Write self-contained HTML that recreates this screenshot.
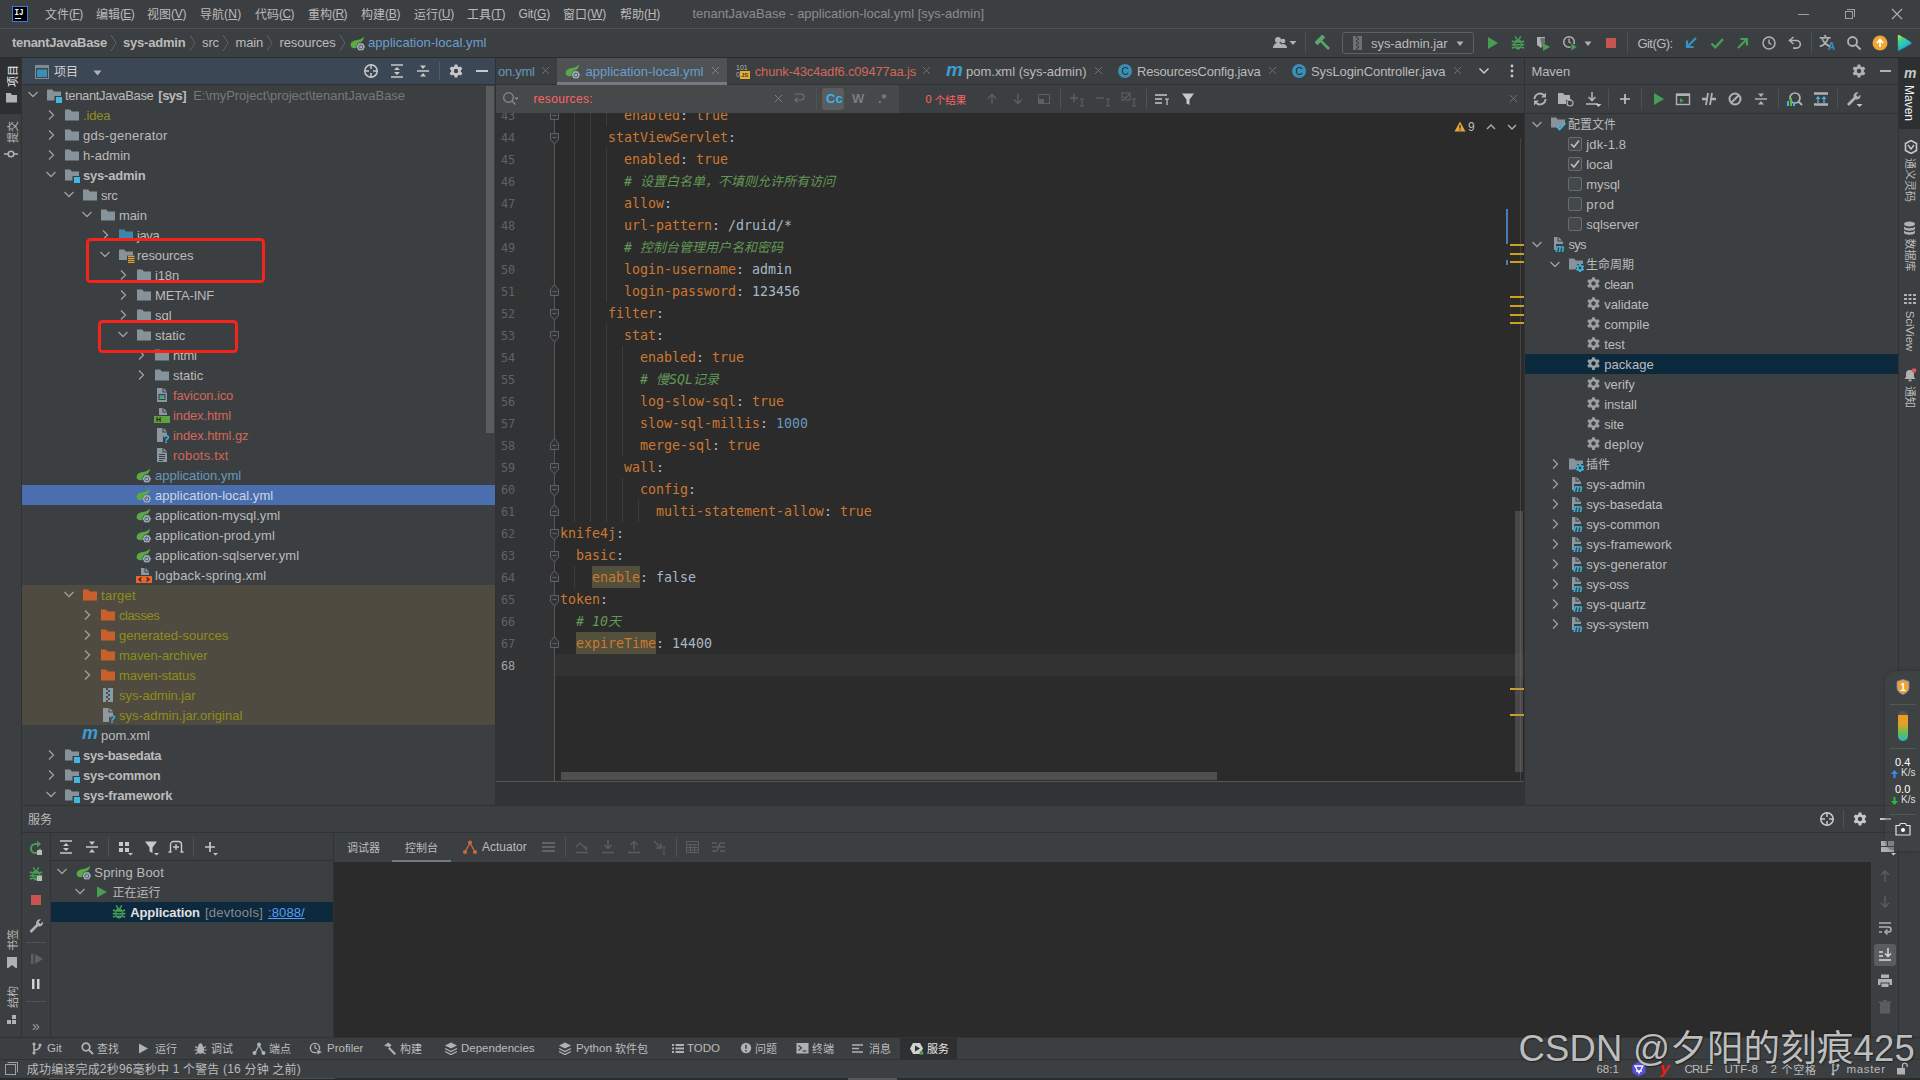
<!DOCTYPE html>
<html lang="zh-CN"><head><meta charset="utf-8"><title>tenantJavaBase - application-local.yml</title>
<style>
*{box-sizing:border-box;margin:0;padding:0}
html,body{width:1920px;height:1080px;overflow:hidden;background:#3c3f41}
body{position:relative;font-family:"Liberation Sans","Noto Sans CJK SC",sans-serif;font-size:13px;color:#bbbbbb}
.t{position:absolute;white-space:pre;}
.u{font-size:13px}
.c{font-size:12px}
.t .c{position:relative;top:1px}
.s{font-size:12px}
.s .c,.c.s{font-size:11px}
.sb .c{font-size:12px}
.b{font-weight:bold}
.m{font-family:"DejaVu Sans Mono","Liberation Mono","Noto Sans CJK SC",monospace;font-size:13.290px}
.ln{font-family:"DejaVu Sans Mono","Liberation Mono",monospace;font-size:11.800px}
u{text-decoration:underline;text-underline-offset:1px}
.m .z{font-size:13px}
.k{color:#cc7832}.v{color:#a9b7c6}.n{color:#6897bb}.cm{color:#629755;font-style:italic}
.hl{}
</style></head>
<body>
<div style="position:absolute;left:0px;top:0px;width:1920px;height:1080px;background:#3c3f41;"></div>
<div style="position:absolute;left:0px;top:28px;width:1920px;height:1px;background:#515151;"></div>
<div style="position:absolute;left:0px;top:57px;width:1920px;height:1px;background:#2b2b2b;"></div>
<div style="position:absolute;left:12px;top:6px;width:16px;height:16px;background:#000;border:1px solid #3b7be0"></div>
<svg style="position:absolute;left:12px;top:6px" width="16" height="16" viewBox="0 0 16 16" ><text x="2.600" y="9" font-family="Liberation Mono, monospace" font-weight="bold" font-size="8.500" fill="#fff" textLength="9" lengthAdjust="spacingAndGlyphs">IJ</text></svg>
<div style="position:absolute;left:15px;top:18px;width:6px;height:1px;background:#fff;"></div>
<div class="t u" style="left:45px;top:0px;height:28px;line-height:28px;"><span class="c">文件</span><span style="font-size:12px;letter-spacing:-0.61px">(<u>F</u>)</span></div>
<div class="t u" style="left:96px;top:0px;height:28px;line-height:28px;"><span class="c">编辑</span><span style="font-size:12px;letter-spacing:-0.67px">(<u>E</u>)</span></div>
<div class="t u" style="left:147px;top:0px;height:28px;line-height:28px;"><span class="c">视图</span><span style="font-size:12px;letter-spacing:-0.33px">(<u>V</u>)</span></div>
<div class="t u" style="left:200px;top:0px;height:28px;line-height:28px;"><span class="c">导航</span><span style="font-size:12px;letter-spacing:0.28px">(<u>N</u>)</span></div>
<div class="t u" style="left:255px;top:0px;height:28px;line-height:28px;"><span class="c">代码</span><span style="font-size:12px;letter-spacing:-0.55px">(<u>C</u>)</span></div>
<div class="t u" style="left:308px;top:0px;height:28px;line-height:28px;"><span class="c">重构</span><span style="font-size:12px;letter-spacing:-0.55px">(<u>R</u>)</span></div>
<div class="t u" style="left:361px;top:0px;height:28px;line-height:28px;"><span class="c">构建</span><span style="font-size:12px;letter-spacing:-0.33px">(<u>B</u>)</span></div>
<div class="t u" style="left:414px;top:0px;height:28px;line-height:28px;"><span class="c">运行</span><span style="font-size:12px;letter-spacing:-0.22px">(<u>U</u>)</span></div>
<div class="t u" style="left:467px;top:0px;height:28px;line-height:28px;"><span class="c">工具</span><span style="font-size:12px;letter-spacing:-0.44px">(<u>T</u>)</span></div>
<div class="t u" style="left:518.5px;top:0px;height:28px;line-height:28px;font-size:12px;letter-spacing:-0.193px;">Git(<u>G</u>)</div>
<div class="t u" style="left:563px;top:0px;height:28px;line-height:28px;"><span class="c">窗口</span><span style="font-size:12px;letter-spacing:-0.11px">(<u>W</u>)</span></div>
<div class="t u" style="left:620px;top:0px;height:28px;line-height:28px;"><span class="c">帮助</span><span style="font-size:12px;letter-spacing:-0.22px">(<u>H</u>)</span></div>
<div class="t u" style="left:692.5px;top:0px;height:28px;line-height:28px;color:#8c8c8c;letter-spacing:-0.008px;">tenantJavaBase - application-local.yml [sys-admin]</div>
<div style="position:absolute;left:1798px;top:14px;width:11px;height:1px;background:#a0a0a0;"></div>
<div style="position:absolute;left:1845px;top:11px;width:8px;height:8px;border:1px solid #a0a0a0"></div>
<div style="position:absolute;left:1847px;top:9px;width:8px;height:8px;border-top:1px solid #a0a0a0;border-right:1px solid #a0a0a0"></div>
<svg style="position:absolute;left:1891px;top:8px" width="12" height="12" viewBox="0 0 12 12" ><path d="M1 1l10 10M11 1L1 11" stroke="#b0b0b0" stroke-width="1.1"/></svg>
<div class="t u b" style="left:12px;top:29px;height:28px;line-height:28px;letter-spacing:-0.285px;">tenantJavaBase</div>
<svg style="position:absolute;left:110px;top:34px" width="8" height="18" viewBox="0 0 8 18" ><path d="M1 1l5 8-5 8" fill="none" stroke="#5e6163" stroke-width="1"/></svg>
<div class="t u b" style="left:123px;top:29px;height:28px;line-height:28px;letter-spacing:-0.200px;">sys-admin</div>
<svg style="position:absolute;left:189px;top:34px" width="8" height="18" viewBox="0 0 8 18" ><path d="M1 1l5 8-5 8" fill="none" stroke="#5e6163" stroke-width="1"/></svg>
<div class="t u" style="left:202px;top:29px;height:28px;line-height:28px;letter-spacing:-0.110px;">src</div>
<svg style="position:absolute;left:222px;top:34px" width="8" height="18" viewBox="0 0 8 18" ><path d="M1 1l5 8-5 8" fill="none" stroke="#5e6163" stroke-width="1"/></svg>
<div class="t u" style="left:235.5px;top:29px;height:28px;line-height:28px;letter-spacing:-0.169px;">main</div>
<svg style="position:absolute;left:266px;top:34px" width="8" height="18" viewBox="0 0 8 18" ><path d="M1 1l5 8-5 8" fill="none" stroke="#5e6163" stroke-width="1"/></svg>
<div class="t u" style="left:279.5px;top:29px;height:28px;line-height:28px;letter-spacing:-0.119px;">resources</div>
<svg style="position:absolute;left:339px;top:34px" width="8" height="18" viewBox="0 0 8 18" ><path d="M1 1l5 8-5 8" fill="none" stroke="#5e6163" stroke-width="1"/></svg>
<svg style="position:absolute;left:350px;top:35px" width="16" height="16" viewBox="0 0 16 16" ><path d="M14 1.400C13.600 4.600 12.600 6.400 10.600 7.300L10 11C7.500 13.600 3.500 13.900 1.200 12C-0.200 9.500 1 6.400 4.600 5.400C8 4.600 11.600 4.600 14 1.400z" fill="#5aa846"/><path d="M15.300 11.800l-2.250 3.900h-4.500L6.300 11.800l2.250-3.900h4.500z" fill="#aab9c6" stroke="#3c3f41" stroke-width=".7"/><circle cx="10.800" cy="11.900" r="2" fill="none" stroke="#3c4a58" stroke-width=".9"/><rect x="10.200" y="8.900" width="1.200" height="1.800" fill="#aab9c6"/><rect x="10.450" y="9.400" width=".7" height="2.300" fill="#3c4a58"/></svg>
<div class="t u" style="left:368px;top:29px;height:28px;line-height:28px;color:#6a9fd0;letter-spacing:0.069px;">application-local.yml</div>
<svg style="position:absolute;left:1272px;top:35px" width="16" height="16" viewBox="0 0 16 16" ><circle cx="6" cy="5" r="3" fill="#afb1b3"/><path d="M1 13c0-3 2-5 5-5s5 2 5 5z" fill="#afb1b3"/><circle cx="11" cy="6" r="2.3" fill="#afb1b3"/><path d="M9 13c0-2 .5-4 2-4s4 1 4 4z" fill="#afb1b3"/></svg>
<svg style="position:absolute;left:1289px;top:40px" width="8" height="6" viewBox="0 0 8 6" ><path d="M0.5 1h7L4 5z" fill="#afb1b3"/></svg>
<div style="position:absolute;left:1305px;top:33px;width:1px;height:20px;background:#515151;"></div>
<svg style="position:absolute;left:1315px;top:35px" width="16" height="16" viewBox="0 0 16 16" ><g transform="rotate(-45 8 8)" fill="#59a869"><rect x="2.500" y="1.500" width="11" height="4.200"/><rect x="6.700" y="5" width="2.600" height="11.500"/></g></svg>
<div style="position:absolute;left:1342px;top:32px;width:132px;height:22px;border:1px solid #5e6060;border-radius:3px;background:#3c3f41"></div>
<svg style="position:absolute;left:1350px;top:35px" width="16" height="16" viewBox="0 0 16 16" ><rect x="3" y="1" width="9" height="14" fill="#6e7173"/><g fill="#3c3f41"><rect x="6" y="1" width="1.5" height="2"/><rect x="7.5" y="3" width="1.5" height="2"/><rect x="6" y="5" width="1.5" height="2"/><rect x="7.5" y="7" width="1.5" height="2"/><rect x="6" y="9" width="1.5" height="2"/><rect x="7.5" y="11" width="1.5" height="2"/><rect x="6" y="13" width="1.5" height="2"/></g></svg>
<div class="t u" style="left:1371px;top:30px;height:28px;line-height:28px;letter-spacing:-0.061px;">sys-admin.jar</div>
<svg style="position:absolute;left:1456px;top:41px" width="8" height="6" viewBox="0 0 8 6" ><path d="M0.5 0.5h7L4 5z" fill="#afb1b3"/></svg>
<svg style="position:absolute;left:1484px;top:35px" width="16" height="16" viewBox="0 0 16 16" ><path d="M4 2l10 6-10 6z" fill="#499c54"/></svg>
<svg style="position:absolute;left:1510px;top:35px" width="16" height="16" viewBox="0 0 16 16" ><ellipse cx="8" cy="9.300" rx="4" ry="5.300" fill="#499c54"/><path d="M5.200 1.300l1.900 3M10.800 1.300l-1.900 3" stroke="#499c54" stroke-width="1.500"/><path d="M1.900 6.200l2.800 .8M14.100 6.200l-2.800 .8M1.700 9.600h3M14.300 9.600h-3M1.900 13l2.800-.8M14.100 13l-2.800-.8" stroke="#499c54" stroke-width="1.800"/><path d="M5.400 8.300h5.200M5.400 11h5.200" stroke="#3c3f41" stroke-width="1.200"/></svg>
<svg style="position:absolute;left:1535px;top:35px" width="16" height="16" viewBox="0 0 16 16" ><path d="M2 2h8v5l-4 6-4-3z" fill="#afb1b3"/><path d="M5 3h5v4l-3 5z" fill="#6e7173"/><path d="M8 8l7 4-7 4z" fill="#499c54"/></svg>
<svg style="position:absolute;left:1562px;top:35px" width="16" height="16" viewBox="0 0 16 16" ><circle cx="7" cy="7" r="5.3" fill="none" stroke="#afb1b3" stroke-width="1.5"/><path d="M7 3.5V7l2.5 1.5" stroke="#afb1b3" stroke-width="1.3" fill="none"/><path d="M9 8l6.5 4-6.5 4z" fill="#499c54" stroke="#3c3f41" stroke-width=".8"/></svg>
<svg style="position:absolute;left:1584px;top:41px" width="8" height="6" viewBox="0 0 8 6" ><path d="M0.5 0.5h7L4 5z" fill="#afb1b3"/></svg>
<div style="position:absolute;left:1606px;top:38px;width:10px;height:10px;background:#c75450;"></div>
<div style="position:absolute;left:1627px;top:33px;width:1px;height:20px;background:#515151;"></div>
<div class="t u" style="left:1637.5px;top:30px;height:28px;line-height:28px;letter-spacing:-0.570px;">Git(G):</div>
<svg style="position:absolute;left:1683px;top:35px" width="16" height="16" viewBox="0 0 16 16" ><path d="M13 3L4.5 11.5M4 5.5V12h6.5" fill="none" stroke="#3592c4" stroke-width="2.2"/></svg>
<svg style="position:absolute;left:1709px;top:35px" width="16" height="16" viewBox="0 0 16 16" ><path d="M2.5 8.5l3.8 3.8L14 4.2" fill="none" stroke="#499c54" stroke-width="2.4"/></svg>
<svg style="position:absolute;left:1735px;top:35px" width="16" height="16" viewBox="0 0 16 16" ><path d="M3 13l8.5-8.5M5.5 4H12v6.5" fill="none" stroke="#499c54" stroke-width="2.2"/></svg>
<svg style="position:absolute;left:1761px;top:35px" width="16" height="16" viewBox="0 0 16 16" ><circle cx="8" cy="8" r="6" fill="none" stroke="#afb1b3" stroke-width="1.5"/><path d="M8 4.5V8l2.5 1.5" stroke="#afb1b3" stroke-width="1.4" fill="none"/></svg>
<svg style="position:absolute;left:1787px;top:35px" width="16" height="16" viewBox="0 0 16 16" ><path d="M3 5.5h6.5a3.8 3.8 0 010 7.600H6" fill="none" stroke="#afb1b3" stroke-width="1.6"/><path d="M6.5 2L2.5 5.5l4 3.500" fill="none" stroke="#afb1b3" stroke-width="1.6"/></svg>
<div style="position:absolute;left:1811px;top:33px;width:1px;height:20px;background:#515151;"></div>
<div class="t" style="left:1819px;top:35px;font:bold 12px/12px 'Noto Sans CJK SC',sans-serif;color:#afb1b3">文</div>
<div class="t" style="left:1828px;top:41px;font:bold 10px/12px 'Liberation Sans',sans-serif;color:#3592c4">A</div>
<svg style="position:absolute;left:1846px;top:35px" width="16" height="16" viewBox="0 0 16 16" ><circle cx="6.5" cy="6.5" r="4.5" fill="none" stroke="#afb1b3" stroke-width="1.8"/><path d="M10 10l4.5 4.5" stroke="#afb1b3" stroke-width="2"/></svg>
<svg style="position:absolute;left:1872px;top:35px" width="16" height="16" viewBox="0 0 16 16" ><circle cx="8" cy="8" r="7.500" fill="#f0a732"/><path d="M8 12V5M4.800 8L8 4.500 11.200 8" fill="none" stroke="#fff" stroke-width="1.700"/></svg>
<svg style="position:absolute;left:1896px;top:34px" width="17" height="18" viewBox="0 0 17 18" ><defs><linearGradient id="jbg" x1="0" y1="0" x2="0.600" y2="1"><stop offset="0" stop-color="#d8e84a"/><stop offset=".35" stop-color="#3fd08a"/><stop offset=".7" stop-color="#1fa8c8"/><stop offset="1" stop-color="#2a6fe0"/></linearGradient></defs><path d="M3.500 1.200C2.500.8 1.800 1.400 1.800 2.400V15.500c0 1 .8 1.600 1.700 1.100L15 10.200c.9-.5.900-1.700 0-2.200z" fill="url(#jbg)"/><path d="M2 9l6-6 6.500 5.500L5 15z" fill="#40e0b0" opacity=".35"/></svg>
<div style="position:absolute;left:21px;top:58px;width:1px;height:979px;background:#323232;"></div>
<div style="position:absolute;left:0px;top:58px;width:21px;height:56px;background:#2d2f30;"></div>
<div class="t c" style="left:12.5px;top:76px;width:0;height:0;overflow:visible"><div style="position:absolute;white-space:pre;transform:translate(-50%,-50%) rotate(-90deg);font-size:11px;line-height:13px;color:#f0f0f0;">项目</div></div>
<svg style="position:absolute;left:6px;top:92px" width="11" height="11" viewBox="0 0 11 11" ><path d="M0 1h4.500l1.500 2H11v7.500H0z" fill="#afb1b3"/></svg>
<div class="t c" style="left:12.5px;top:132px;width:0;height:0;overflow:visible"><div style="position:absolute;white-space:pre;transform:translate(-50%,-50%) rotate(-90deg);font-size:11px;line-height:13px;color:#bbbbbb;">提交</div></div>
<svg style="position:absolute;left:4px;top:147px" width="14" height="14" viewBox="0 0 14 14" ><circle cx="7" cy="7" r="2.800" fill="none" stroke="#afb1b3" stroke-width="1.600"/><path d="M0 7h4M10 7h4" stroke="#afb1b3" stroke-width="1.600"/></svg>
<div class="t c" style="left:12.5px;top:940px;width:0;height:0;overflow:visible"><div style="position:absolute;white-space:pre;transform:translate(-50%,-50%) rotate(-90deg);font-size:11px;line-height:13px;color:#bbbbbb;">书签</div></div>
<svg style="position:absolute;left:7px;top:957px" width="10" height="11" viewBox="0 0 10 11" ><path d="M0 0h10v12l-5-4-5 4z" fill="#afb1b3"/></svg>
<div class="t c" style="left:12.5px;top:997px;width:0;height:0;overflow:visible"><div style="position:absolute;white-space:pre;transform:translate(-50%,-50%) rotate(-90deg);font-size:11px;line-height:13px;color:#bbbbbb;">结构</div></div>
<svg style="position:absolute;left:7px;top:1015px" width="10" height="10" viewBox="0 0 10 10" ><rect x="5" y="0" width="4" height="4" fill="#afb1b3"/><rect x="0" y="5" width="4" height="4" fill="#afb1b3"/><rect x="5" y="5" width="4" height="4" fill="#afb1b3"/></svg>
<div style="position:absolute;left:22px;top:58px;width:473px;height:26px;background:#3b4754;"></div>
<div style="position:absolute;left:22px;top:84px;width:473px;height:1px;background:#323232;"></div>
<div style="position:absolute;left:495px;top:58px;width:1px;height:748px;background:#323232;"></div>
<svg style="position:absolute;left:35px;top:65px" width="14" height="14" viewBox="0 0 14 14" ><rect x="0.500" y="0.500" width="13" height="13" fill="none" stroke="#7f8b91"/><rect x="0.500" y="0.500" width="13" height="2.500" fill="#7f8b91"/><rect x="2" y="4.500" width="10" height="7.500" fill="#3a8fb4"/></svg>
<div class="t c" style="left:54px;top:59px;height:26px;line-height:26px;color:#d0d0d0;">项目</div>
<svg style="position:absolute;left:93px;top:70px" width="9" height="6" viewBox="0 0 9 6" ><path d="M0.500 0.500h8L4.500 5.500z" fill="#afb1b3"/></svg>
<svg style="position:absolute;left:363px;top:63px" width="16" height="16" viewBox="0 0 16 16" ><circle cx="8" cy="8" r="6.200" fill="none" stroke="#c8c8c8" stroke-width="1.500"/><path d="M8 1v5M8 10v5M1 8h5M10 8h5" stroke="#c8c8c8" stroke-width="1.500"/></svg>
<svg style="position:absolute;left:389px;top:63px" width="16" height="16" viewBox="0 0 16 16" ><path d="M2 2h12M2 14h12" stroke="#c8c8c8" stroke-width="1.500"/><path d="M8 4L5 7h6zM8 12L5 9h6z" fill="#c8c8c8"/></svg>
<svg style="position:absolute;left:415px;top:63px" width="16" height="16" viewBox="0 0 16 16" ><path d="M2 8h12" stroke="#c8c8c8" stroke-width="1.500"/><path d="M8 6L5 2.500h6zM8 10l-3 3.500h6z" fill="#c8c8c8"/></svg>
<div style="position:absolute;left:439px;top:62px;width:1px;height:18px;background:#4e5a66;"></div>
<svg style="position:absolute;left:448px;top:63px" width="16" height="16" viewBox="0 0 16 16" ><g><path d="M6.18 4.10L6.69 1.50H9.31L9.82 4.10z" transform="rotate(0.0 8 8)" fill="#c8c8c8"/><path d="M6.18 4.10L6.69 1.50H9.31L9.82 4.10z" transform="rotate(60.0 8 8)" fill="#c8c8c8"/><path d="M6.18 4.10L6.69 1.50H9.31L9.82 4.10z" transform="rotate(120.0 8 8)" fill="#c8c8c8"/><path d="M6.18 4.10L6.69 1.50H9.31L9.82 4.10z" transform="rotate(180.0 8 8)" fill="#c8c8c8"/><path d="M6.18 4.10L6.69 1.50H9.31L9.82 4.10z" transform="rotate(240.0 8 8)" fill="#c8c8c8"/><path d="M6.18 4.10L6.69 1.50H9.31L9.82 4.10z" transform="rotate(300.0 8 8)" fill="#c8c8c8"/><circle cx="8" cy="8" r="4.81" fill="#c8c8c8"/></g><circle cx="8" cy="8" r="2.21" fill="#3b4754"/></svg>
<div style="position:absolute;left:476px;top:70px;width:12px;height:2px;background:#c8c8c8;"></div>
<svg style="position:absolute;left:25px;top:86px" width="16" height="16" viewBox="0 0 16 16" ><path d="M3.5 6l4.5 4.5L12.5 6" fill="none" stroke="#9da0a2" stroke-width="1.3"/></svg>
<svg style="position:absolute;left:46px;top:87px" width="16" height="16" viewBox="0 0 16 16" ><path d="M1 2.5h5.2l1.6 2H15v4.5H8.5v4.5H1z" fill="#87939a"/><rect x="10" y="10" width="6" height="6" fill="#40b6e0"/></svg>
<div class="t u" style="left:65px;top:86px;height:20px;line-height:20px;"><span style="letter-spacing:-0.338px">tenantJavaBase</span><b style="letter-spacing:-0.5px;margin-left:4.8px">[sys]</b><span style="color:#787878;margin-left:7px;letter-spacing:-0.039px">E:\myProject\project\tenantJavaBase</span></div>
<svg style="position:absolute;left:43px;top:107px" width="16" height="16" viewBox="0 0 16 16" ><path d="M6 3.5l4.5 4.5L6 12.5" fill="none" stroke="#9da0a2" stroke-width="1.3"/></svg>
<svg style="position:absolute;left:64px;top:107px" width="16" height="16" viewBox="0 0 16 16" ><path d="M1 2.5h5.2l1.6 2H15v9H1z" fill="#87939a"/></svg>
<div class="t u" style="left:83px;top:106px;height:20px;line-height:20px;color:#8d8e1d;"><span style="letter-spacing:-0.158px">.idea</span></div>
<svg style="position:absolute;left:43px;top:127px" width="16" height="16" viewBox="0 0 16 16" ><path d="M6 3.5l4.5 4.5L6 12.5" fill="none" stroke="#9da0a2" stroke-width="1.3"/></svg>
<svg style="position:absolute;left:64px;top:127px" width="16" height="16" viewBox="0 0 16 16" ><path d="M1 2.5h5.2l1.6 2H15v9H1z" fill="#87939a"/></svg>
<div class="t u" style="left:83px;top:126px;height:20px;line-height:20px;"><span style="letter-spacing:0.290px">gds-generator</span></div>
<svg style="position:absolute;left:43px;top:147px" width="16" height="16" viewBox="0 0 16 16" ><path d="M6 3.5l4.5 4.5L6 12.5" fill="none" stroke="#9da0a2" stroke-width="1.3"/></svg>
<svg style="position:absolute;left:64px;top:147px" width="16" height="16" viewBox="0 0 16 16" ><path d="M1 2.5h5.2l1.6 2H15v9H1z" fill="#87939a"/></svg>
<div class="t u" style="left:83px;top:146px;height:20px;line-height:20px;"><span style="letter-spacing:0.062px">h-admin</span></div>
<svg style="position:absolute;left:43px;top:166px" width="16" height="16" viewBox="0 0 16 16" ><path d="M3.5 6l4.5 4.5L12.5 6" fill="none" stroke="#9da0a2" stroke-width="1.3"/></svg>
<svg style="position:absolute;left:64px;top:167px" width="16" height="16" viewBox="0 0 16 16" ><path d="M1 2.5h5.2l1.6 2H15v4.5H8.5v4.5H1z" fill="#87939a"/><rect x="10" y="10" width="6" height="6" fill="#40b6e0"/></svg>
<div class="t u b" style="left:83px;top:166px;height:20px;line-height:20px;"><span style="letter-spacing:-0.200px">sys-admin</span></div>
<svg style="position:absolute;left:61px;top:186px" width="16" height="16" viewBox="0 0 16 16" ><path d="M3.5 6l4.5 4.5L12.5 6" fill="none" stroke="#9da0a2" stroke-width="1.3"/></svg>
<svg style="position:absolute;left:82px;top:187px" width="16" height="16" viewBox="0 0 16 16" ><path d="M1 2.5h5.2l1.6 2H15v9H1z" fill="#87939a"/></svg>
<div class="t u" style="left:101px;top:186px;height:20px;line-height:20px;"><span style="letter-spacing:-0.310px">src</span></div>
<svg style="position:absolute;left:79px;top:206px" width="16" height="16" viewBox="0 0 16 16" ><path d="M3.5 6l4.5 4.5L12.5 6" fill="none" stroke="#9da0a2" stroke-width="1.3"/></svg>
<svg style="position:absolute;left:100px;top:207px" width="16" height="16" viewBox="0 0 16 16" ><path d="M1 2.5h5.2l1.6 2H15v9H1z" fill="#87939a"/></svg>
<div class="t u" style="left:119px;top:206px;height:20px;line-height:20px;"><span style="letter-spacing:-0.094px">main</span></div>
<svg style="position:absolute;left:97px;top:227px" width="16" height="16" viewBox="0 0 16 16" ><path d="M6 3.5l4.5 4.5L6 12.5" fill="none" stroke="#9da0a2" stroke-width="1.3"/></svg>
<svg style="position:absolute;left:118px;top:227px" width="16" height="16" viewBox="0 0 16 16" ><path d="M1 2.5h5.2l1.6 2H15v9H1z" fill="#3d88aa"/></svg>
<div class="t u" style="left:137px;top:226px;height:20px;line-height:20px;"><span style="letter-spacing:-0.412px">java</span></div>
<svg style="position:absolute;left:97px;top:246px" width="16" height="16" viewBox="0 0 16 16" ><path d="M3.5 6l4.5 4.5L12.5 6" fill="none" stroke="#9da0a2" stroke-width="1.3"/></svg>
<svg style="position:absolute;left:118px;top:247px" width="17" height="16" viewBox="0 0 17 16" ><path d="M1 2.500h5.200l1.600 2H15v4H9v4.500H1z" fill="#87939a"/><g fill="#f4af3d"><rect x="10" y="8.800" width="6.500" height="1.100"/><rect x="10" y="10.800" width="6.500" height="1.100"/><rect x="10" y="12.800" width="6.500" height="1.100"/><rect x="10" y="14.800" width="6.500" height="1.100"/></g></svg>
<div class="t u" style="left:137px;top:246px;height:20px;line-height:20px;"><span style="letter-spacing:-0.086px">resources</span></div>
<svg style="position:absolute;left:115px;top:267px" width="16" height="16" viewBox="0 0 16 16" ><path d="M6 3.5l4.5 4.5L6 12.5" fill="none" stroke="#9da0a2" stroke-width="1.3"/></svg>
<svg style="position:absolute;left:136px;top:267px" width="16" height="16" viewBox="0 0 16 16" ><path d="M1 2.5h5.2l1.6 2H15v9H1z" fill="#87939a"/></svg>
<div class="t u" style="left:155px;top:266px;height:20px;line-height:20px;"><span style="letter-spacing:-0.144px">i18n</span></div>
<svg style="position:absolute;left:115px;top:287px" width="16" height="16" viewBox="0 0 16 16" ><path d="M6 3.5l4.5 4.5L6 12.5" fill="none" stroke="#9da0a2" stroke-width="1.3"/></svg>
<svg style="position:absolute;left:136px;top:287px" width="16" height="16" viewBox="0 0 16 16" ><path d="M1 2.5h5.2l1.6 2H15v9H1z" fill="#87939a"/></svg>
<div class="t u" style="left:155px;top:286px;height:20px;line-height:20px;"><span style="letter-spacing:-0.164px">META-INF</span></div>
<svg style="position:absolute;left:115px;top:307px" width="16" height="16" viewBox="0 0 16 16" ><path d="M6 3.5l4.5 4.5L6 12.5" fill="none" stroke="#9da0a2" stroke-width="1.3"/></svg>
<svg style="position:absolute;left:136px;top:307px" width="16" height="16" viewBox="0 0 16 16" ><path d="M1 2.5h5.2l1.6 2H15v9H1z" fill="#87939a"/></svg>
<div class="t u" style="left:155px;top:306px;height:20px;line-height:20px;"><span style="letter-spacing:0.027px">sql</span></div>
<svg style="position:absolute;left:115px;top:326px" width="16" height="16" viewBox="0 0 16 16" ><path d="M3.5 6l4.5 4.5L12.5 6" fill="none" stroke="#9da0a2" stroke-width="1.3"/></svg>
<svg style="position:absolute;left:136px;top:327px" width="16" height="16" viewBox="0 0 16 16" ><path d="M1 2.5h5.2l1.6 2H15v9H1z" fill="#87939a"/></svg>
<div class="t u" style="left:155px;top:326px;height:20px;line-height:20px;"><span style="letter-spacing:-0.023px">static</span></div>
<svg style="position:absolute;left:133px;top:347px" width="16" height="16" viewBox="0 0 16 16" ><path d="M6 3.5l4.5 4.5L6 12.5" fill="none" stroke="#9da0a2" stroke-width="1.3"/></svg>
<svg style="position:absolute;left:154px;top:347px" width="16" height="16" viewBox="0 0 16 16" ><path d="M1 2.5h5.2l1.6 2H15v9H1z" fill="#87939a"/></svg>
<div class="t u" style="left:173px;top:346px;height:20px;line-height:20px;"><span style="letter-spacing:-0.214px">html</span></div>
<svg style="position:absolute;left:133px;top:367px" width="16" height="16" viewBox="0 0 16 16" ><path d="M6 3.5l4.5 4.5L6 12.5" fill="none" stroke="#9da0a2" stroke-width="1.3"/></svg>
<svg style="position:absolute;left:154px;top:367px" width="16" height="16" viewBox="0 0 16 16" ><path d="M1 2.5h5.2l1.6 2H15v9H1z" fill="#87939a"/></svg>
<div class="t u" style="left:173px;top:366px;height:20px;line-height:20px;"><span style="letter-spacing:-0.023px">static</span></div>
<svg style="position:absolute;left:154px;top:387px" width="16" height="16" viewBox="0 0 16 16" ><path d="M8.5 1H3v14h10V5.5H8.5z" fill="#9aa7b0" opacity=".85"/><path d="M9.5 1L13 4.5H9.5z" fill="#9aa7b0" opacity=".85"/><rect x="4.5" y="7" width="7" height="6" fill="#3c3f41"/><rect x="5.5" y="8" width="5" height="4" fill="#3592c4"/><path d="M5.5 12l2-2 1 1 1-1.5 1 2.5z" fill="#62b543"/></svg>
<div class="t u" style="left:173px;top:386px;height:20px;line-height:20px;color:#d1675a;"><span style="letter-spacing:-0.111px">favicon.ico</span></div>
<svg style="position:absolute;left:154px;top:407px" width="16" height="16" viewBox="0 0 16 16" ><path d="M8.5 1H5v7h8V5.5H8.5z" fill="#9aa7b0" opacity=".85"/><path d="M9.5 1L13 4.5H9.5z" fill="#9aa7b0" opacity=".85"/><rect x="0" y="9" width="16" height="7" fill="#5fa23f"/><text x="2" y="15" font-family="Liberation Sans, sans-serif" font-size="7" font-weight="bold" fill="#231f20">H</text></svg>
<div class="t u" style="left:173px;top:406px;height:20px;line-height:20px;color:#d1675a;"><span style="letter-spacing:-0.115px">index.html</span></div>
<svg style="position:absolute;left:154px;top:427px" width="16" height="16" viewBox="0 0 16 16" ><path d="M8.5 1H3v14h6V9h4V5.5H8.5z" fill="#9aa7b0" opacity=".85"/><path d="M9.5 1L13 4.5H9.5z" fill="#9aa7b0" opacity=".85"/><text x="9" y="16" font-family="Liberation Sans, sans-serif" font-size="11" font-weight="bold" fill="#40b6e0">?</text></svg>
<div class="t u" style="left:173px;top:426px;height:20px;line-height:20px;color:#d1675a;"><span style="letter-spacing:-0.084px">index.html.gz</span></div>
<svg style="position:absolute;left:154px;top:447px" width="16" height="16" viewBox="0 0 16 16" ><path d="M8.5 1H3v14h10V5.5H8.5z" fill="#9aa7b0" opacity=".85"/><path d="M9.5 1L13 4.5H9.5z" fill="#9aa7b0" opacity=".85"/><g fill="#3c3f41"><rect x="5" y="7" width="6" height="1"/><rect x="5" y="9" width="6" height="1"/><rect x="5" y="11" width="6" height="1"/><rect x="5" y="13" width="4" height="1"/></g></svg>
<div class="t u" style="left:173px;top:446px;height:20px;line-height:20px;color:#d1675a;"><span style="letter-spacing:0.204px">robots.txt</span></div>
<svg style="position:absolute;left:136px;top:467px" width="16" height="16" viewBox="0 0 16 16" ><path d="M14 1.400C13.600 4.600 12.600 6.400 10.600 7.300L10 11C7.500 13.600 3.500 13.900 1.200 12C-0.200 9.500 1 6.400 4.600 5.400C8 4.600 11.600 4.600 14 1.400z" fill="#5aa846"/><path d="M15.300 11.800l-2.250 3.900h-4.500L6.300 11.800l2.250-3.900h4.500z" fill="#aab9c6" stroke="#3c3f41" stroke-width=".7"/><circle cx="10.800" cy="11.900" r="2" fill="none" stroke="#3c4a58" stroke-width=".9"/><rect x="10.200" y="8.900" width="1.200" height="1.800" fill="#aab9c6"/><rect x="10.450" y="9.400" width=".7" height="2.300" fill="#3c4a58"/></svg>
<div class="t u" style="left:155px;top:466px;height:20px;line-height:20px;color:#6897bb;"><span style="letter-spacing:0.015px">application.yml</span></div>
<div style="position:absolute;left:22px;top:485px;width:473px;height:20px;background:#4b6eaf;"></div>
<svg style="position:absolute;left:136px;top:487px" width="16" height="16" viewBox="0 0 16 16" ><path d="M14 1.400C13.600 4.600 12.600 6.400 10.600 7.300L10 11C7.500 13.600 3.500 13.900 1.200 12C-0.200 9.500 1 6.400 4.600 5.400C8 4.600 11.600 4.600 14 1.400z" fill="#5aa846"/><path d="M15.300 11.800l-2.250 3.900h-4.500L6.300 11.800l2.250-3.900h4.500z" fill="#aab9c6" stroke="#4b6eaf" stroke-width=".7"/><circle cx="10.800" cy="11.900" r="2" fill="none" stroke="#3c4a58" stroke-width=".9"/><rect x="10.200" y="8.900" width="1.200" height="1.800" fill="#aab9c6"/><rect x="10.450" y="9.400" width=".7" height="2.300" fill="#3c4a58"/></svg>
<div class="t u" style="left:155px;top:486px;height:20px;line-height:20px;color:#c9d7e6;"><span style="letter-spacing:0.055px">application-local.yml</span></div>
<svg style="position:absolute;left:136px;top:507px" width="16" height="16" viewBox="0 0 16 16" ><path d="M14 1.400C13.600 4.600 12.600 6.400 10.600 7.300L10 11C7.500 13.600 3.500 13.900 1.200 12C-0.200 9.500 1 6.400 4.600 5.400C8 4.600 11.600 4.600 14 1.400z" fill="#5aa846"/><path d="M15.300 11.800l-2.250 3.900h-4.500L6.300 11.800l2.250-3.900h4.500z" fill="#aab9c6" stroke="#3c3f41" stroke-width=".7"/><circle cx="10.800" cy="11.900" r="2" fill="none" stroke="#3c4a58" stroke-width=".9"/><rect x="10.200" y="8.900" width="1.200" height="1.800" fill="#aab9c6"/><rect x="10.450" y="9.400" width=".7" height="2.300" fill="#3c4a58"/></svg>
<div class="t u" style="left:155px;top:506px;height:20px;line-height:20px;"><span style="letter-spacing:0.045px">application-mysql.yml</span></div>
<svg style="position:absolute;left:136px;top:527px" width="16" height="16" viewBox="0 0 16 16" ><path d="M14 1.400C13.600 4.600 12.600 6.400 10.600 7.300L10 11C7.500 13.600 3.500 13.900 1.200 12C-0.200 9.500 1 6.400 4.600 5.400C8 4.600 11.600 4.600 14 1.400z" fill="#5aa846"/><path d="M15.300 11.800l-2.250 3.900h-4.500L6.300 11.800l2.250-3.900h4.500z" fill="#aab9c6" stroke="#3c3f41" stroke-width=".7"/><circle cx="10.800" cy="11.900" r="2" fill="none" stroke="#3c4a58" stroke-width=".9"/><rect x="10.200" y="8.900" width="1.200" height="1.800" fill="#aab9c6"/><rect x="10.450" y="9.400" width=".7" height="2.300" fill="#3c4a58"/></svg>
<div class="t u" style="left:155px;top:526px;height:20px;line-height:20px;"><span style="letter-spacing:0.184px">application-prod.yml</span></div>
<svg style="position:absolute;left:136px;top:547px" width="16" height="16" viewBox="0 0 16 16" ><path d="M14 1.400C13.600 4.600 12.600 6.400 10.600 7.300L10 11C7.500 13.600 3.500 13.900 1.200 12C-0.200 9.500 1 6.400 4.600 5.400C8 4.600 11.600 4.600 14 1.400z" fill="#5aa846"/><path d="M15.300 11.800l-2.250 3.900h-4.500L6.300 11.800l2.250-3.900h4.500z" fill="#aab9c6" stroke="#3c3f41" stroke-width=".7"/><circle cx="10.800" cy="11.900" r="2" fill="none" stroke="#3c4a58" stroke-width=".9"/><rect x="10.200" y="8.900" width="1.200" height="1.800" fill="#aab9c6"/><rect x="10.450" y="9.400" width=".7" height="2.300" fill="#3c4a58"/></svg>
<div class="t u" style="left:155px;top:546px;height:20px;line-height:20px;"><span style="letter-spacing:0.075px">application-sqlserver.yml</span></div>
<svg style="position:absolute;left:136px;top:567px" width="16" height="16" viewBox="0 0 16 16" ><path d="M8.5 1H5v7h8V5.5H8.5z" fill="#9aa7b0" opacity=".85"/><path d="M9.5 1L13 4.5H9.5z" fill="#9aa7b0" opacity=".85"/><rect x="0" y="9" width="16" height="7" fill="#e8642c"/><path d="M5.5 10.5l-2.5 2 2.5 2M10.5 10.5l2.5 2-2.5 2" stroke="#231f20" stroke-width="1.1" fill="none"/></svg>
<div class="t u" style="left:155px;top:566px;height:20px;line-height:20px;"><span style="letter-spacing:0.157px">logback-spring.xml</span></div>
<div style="position:absolute;left:22px;top:585px;width:473px;height:20px;background:#4f4b41;"></div>
<svg style="position:absolute;left:61px;top:586px" width="16" height="16" viewBox="0 0 16 16" ><path d="M3.5 6l4.5 4.5L12.5 6" fill="none" stroke="#9da0a2" stroke-width="1.3"/></svg>
<svg style="position:absolute;left:82px;top:587px" width="16" height="16" viewBox="0 0 16 16" ><path d="M1 2.5h5.2l1.6 2H15v9H1z" fill="#c9602b"/></svg>
<div class="t u" style="left:101px;top:586px;height:20px;line-height:20px;color:#8d8e1d;"><span style="letter-spacing:0.277px">target</span></div>
<div style="position:absolute;left:22px;top:605px;width:473px;height:20px;background:#4f4b41;"></div>
<svg style="position:absolute;left:79px;top:607px" width="16" height="16" viewBox="0 0 16 16" ><path d="M6 3.5l4.5 4.5L6 12.5" fill="none" stroke="#9da0a2" stroke-width="1.3"/></svg>
<svg style="position:absolute;left:100px;top:607px" width="16" height="16" viewBox="0 0 16 16" ><path d="M1 2.5h5.2l1.6 2H15v9H1z" fill="#c9602b"/></svg>
<div class="t u" style="left:119px;top:606px;height:20px;line-height:20px;color:#8d8e1d;"><span style="letter-spacing:-0.435px">classes</span></div>
<div style="position:absolute;left:22px;top:625px;width:473px;height:20px;background:#4f4b41;"></div>
<svg style="position:absolute;left:79px;top:627px" width="16" height="16" viewBox="0 0 16 16" ><path d="M6 3.5l4.5 4.5L6 12.5" fill="none" stroke="#9da0a2" stroke-width="1.3"/></svg>
<svg style="position:absolute;left:100px;top:627px" width="16" height="16" viewBox="0 0 16 16" ><path d="M1 2.5h5.2l1.6 2H15v9H1z" fill="#c9602b"/></svg>
<div class="t u" style="left:119px;top:626px;height:20px;line-height:20px;color:#8d8e1d;"><span style="letter-spacing:0.054px">generated-sources</span></div>
<div style="position:absolute;left:22px;top:645px;width:473px;height:20px;background:#4f4b41;"></div>
<svg style="position:absolute;left:79px;top:647px" width="16" height="16" viewBox="0 0 16 16" ><path d="M6 3.5l4.5 4.5L6 12.5" fill="none" stroke="#9da0a2" stroke-width="1.3"/></svg>
<svg style="position:absolute;left:100px;top:647px" width="16" height="16" viewBox="0 0 16 16" ><path d="M1 2.5h5.2l1.6 2H15v9H1z" fill="#c9602b"/></svg>
<div class="t u" style="left:119px;top:646px;height:20px;line-height:20px;color:#8d8e1d;"><span style="letter-spacing:-0.077px">maven-archiver</span></div>
<div style="position:absolute;left:22px;top:665px;width:473px;height:20px;background:#4f4b41;"></div>
<svg style="position:absolute;left:79px;top:667px" width="16" height="16" viewBox="0 0 16 16" ><path d="M6 3.5l4.5 4.5L6 12.5" fill="none" stroke="#9da0a2" stroke-width="1.3"/></svg>
<svg style="position:absolute;left:100px;top:667px" width="16" height="16" viewBox="0 0 16 16" ><path d="M1 2.5h5.2l1.6 2H15v9H1z" fill="#c9602b"/></svg>
<div class="t u" style="left:119px;top:666px;height:20px;line-height:20px;color:#8d8e1d;"><span style="letter-spacing:-0.127px">maven-status</span></div>
<div style="position:absolute;left:22px;top:685px;width:473px;height:20px;background:#4f4b41;"></div>
<svg style="position:absolute;left:100px;top:687px" width="16" height="16" viewBox="0 0 16 16" ><rect x="3" y="1" width="10" height="14" fill="#9aa7b0" opacity=".85"/><g fill="#4f4b41"><rect x="6" y="1" width="2" height="2"/><rect x="8" y="3" width="2" height="2"/><rect x="6" y="5" width="2" height="2"/><rect x="8" y="7" width="2" height="2"/><rect x="6" y="9" width="2" height="2"/><rect x="8" y="11" width="2" height="2"/><rect x="6" y="13" width="2" height="2"/></g><rect x="5" y="1" width="1" height="14" fill="#40b6e0" opacity=".5"/><rect x="10" y="1" width="1" height="14" fill="#40b6e0" opacity=".5"/></svg>
<div class="t u" style="left:119px;top:686px;height:20px;line-height:20px;color:#8d8e1d;"><span style="letter-spacing:-0.061px">sys-admin.jar</span></div>
<div style="position:absolute;left:22px;top:705px;width:473px;height:20px;background:#4f4b41;"></div>
<svg style="position:absolute;left:100px;top:707px" width="16" height="16" viewBox="0 0 16 16" ><path d="M8.5 1H3v14h6V9h4V5.5H8.5z" fill="#9aa7b0" opacity=".85"/><path d="M9.5 1L13 4.5H9.5z" fill="#9aa7b0" opacity=".85"/><text x="9" y="16" font-family="Liberation Sans, sans-serif" font-size="11" font-weight="bold" fill="#40b6e0">?</text></svg>
<div class="t u" style="left:119px;top:706px;height:20px;line-height:20px;color:#8d8e1d;"><span style="letter-spacing:0.059px">sys-admin.jar.original</span></div>
<span style="position:absolute;left:82px;top:725px;font:italic bold 18px/16px 'Liberation Sans',sans-serif;color:#3c9dd0;letter-spacing:-0.5px">m</span>
<div class="t u" style="left:101px;top:726px;height:20px;line-height:20px;"><span style="letter-spacing:-0.031px">pom.xml</span></div>
<svg style="position:absolute;left:43px;top:747px" width="16" height="16" viewBox="0 0 16 16" ><path d="M6 3.5l4.5 4.5L6 12.5" fill="none" stroke="#9da0a2" stroke-width="1.3"/></svg>
<svg style="position:absolute;left:64px;top:747px" width="16" height="16" viewBox="0 0 16 16" ><path d="M1 2.5h5.2l1.6 2H15v4.5H8.5v4.5H1z" fill="#87939a"/><rect x="10" y="10" width="6" height="6" fill="#40b6e0"/></svg>
<div class="t u b" style="left:83px;top:746px;height:20px;line-height:20px;"><span style="letter-spacing:-0.348px">sys-basedata</span></div>
<svg style="position:absolute;left:43px;top:767px" width="16" height="16" viewBox="0 0 16 16" ><path d="M6 3.5l4.5 4.5L6 12.5" fill="none" stroke="#9da0a2" stroke-width="1.3"/></svg>
<svg style="position:absolute;left:64px;top:767px" width="16" height="16" viewBox="0 0 16 16" ><path d="M1 2.5h5.2l1.6 2H15v4.5H8.5v4.5H1z" fill="#87939a"/><rect x="10" y="10" width="6" height="6" fill="#40b6e0"/></svg>
<div class="t u b" style="left:83px;top:766px;height:20px;line-height:20px;"><span style="letter-spacing:-0.279px">sys-common</span></div>
<svg style="position:absolute;left:43px;top:786px" width="16" height="16" viewBox="0 0 16 16" ><path d="M3.5 6l4.5 4.5L12.5 6" fill="none" stroke="#9da0a2" stroke-width="1.3"/></svg>
<svg style="position:absolute;left:64px;top:787px" width="16" height="16" viewBox="0 0 16 16" ><path d="M1 2.5h5.2l1.6 2H15v4.5H8.5v4.5H1z" fill="#87939a"/><rect x="10" y="10" width="6" height="6" fill="#40b6e0"/></svg>
<div class="t u b" style="left:83px;top:786px;height:20px;line-height:20px;"><span style="letter-spacing:-0.182px">sys-framework</span></div>
<div style="position:absolute;left:486px;top:86px;width:8px;height:347px;background:#595b5d;"></div>
<div style="position:absolute;left:85.5px;top:238.3px;width:179px;height:44.7px;border:3.5px solid #f5231a;border-radius:4.5px"></div>
<div style="position:absolute;left:98px;top:320.2px;width:139.5px;height:32.5px;border:3.5px solid #f5231a;border-radius:4.5px"></div>
<div style="position:absolute;left:496px;top:58px;width:1028px;height:26px;background:#3c3f41;"></div>
<div style="position:absolute;left:496px;top:84px;width:1028px;height:1px;background:#323232;"></div>
<div class="t u" style="left:498px;top:59px;height:26px;line-height:26px;color:#6897bb;letter-spacing:-0.281px;">on.yml</div>
<svg style="position:absolute;left:541px;top:66px" width="9" height="9" viewBox="0 0 9 9" ><path d="M1 1l7 7M8 1L1 8" stroke="#6e7173" stroke-width="1"/></svg>
<div style="position:absolute;left:557px;top:58px;width:170px;height:27px;background:#4e5254;"></div>
<div style="position:absolute;left:557px;top:82px;width:170px;height:3px;background:#747a80;"></div>
<svg style="position:absolute;left:565px;top:63px" width="16" height="16" viewBox="0 0 16 16" ><path d="M14 1.400C13.600 4.600 12.600 6.400 10.600 7.300L10 11C7.500 13.600 3.500 13.900 1.200 12C-0.200 9.500 1 6.400 4.600 5.400C8 4.600 11.600 4.600 14 1.400z" fill="#5aa846"/><path d="M15.300 11.800l-2.250 3.900h-4.500L6.300 11.800l2.250-3.900h4.500z" fill="#aab9c6" stroke="#4e5254" stroke-width=".7"/><circle cx="10.800" cy="11.900" r="2" fill="none" stroke="#3c4a58" stroke-width=".9"/><rect x="10.200" y="8.900" width="1.200" height="1.800" fill="#aab9c6"/><rect x="10.450" y="9.400" width=".7" height="2.300" fill="#3c4a58"/></svg>
<div class="t u" style="left:585.4px;top:59px;height:25px;line-height:25px;color:#6a9fd0;letter-spacing:0.050px;">application-local.yml</div>
<svg style="position:absolute;left:711px;top:66px" width="9" height="9" viewBox="0 0 9 9" ><path d="M1 1l7 7M8 1L1 8" stroke="#7f8385" stroke-width="1"/></svg>
<div class="t" style="left:736px;top:64px;font:7px/7px 'Liberation Sans',sans-serif;color:#afb1b3;letter-spacing:0">101<br>0</div>
<div style="position:absolute;left:740px;top:71px;width:10px;height:8px;background:#e8b030;"></div>
<div class="t" style="left:741px;top:72px;font:bold 6px/7px 'Liberation Sans',sans-serif;color:#3c3f41">JS</div>
<div class="t u" style="left:754.8px;top:59px;height:26px;line-height:26px;color:#d1675a;letter-spacing:-0.193px;">chunk-43c4adf6.c09477aa.js</div>
<svg style="position:absolute;left:922px;top:66px" width="9" height="9" viewBox="0 0 9 9" ><path d="M1 1l7 7M8 1L1 8" stroke="#6e7173" stroke-width="1"/></svg>
<span style="position:absolute;left:946px;top:62px;font:italic bold 19px/16px 'Liberation Sans',sans-serif;color:#3c9dd0;letter-spacing:-0.5px">m</span>
<div class="t u" style="left:966px;top:59px;height:26px;line-height:26px;letter-spacing:-0.006px;">pom.xml (sys-admin)</div>
<svg style="position:absolute;left:1094px;top:66px" width="9" height="9" viewBox="0 0 9 9" ><path d="M1 1l7 7M8 1L1 8" stroke="#6e7173" stroke-width="1"/></svg>
<svg style="position:absolute;left:1117px;top:63px" width="16" height="16" viewBox="0 0 16 16" ><circle cx="8" cy="8" r="7" fill="#3b8eb5"/><text x="8" y="11.6" text-anchor="middle" font-family="Liberation Sans, sans-serif" font-size="10" fill="#2b2b2b">C</text></svg>
<div class="t u" style="left:1137px;top:59px;height:26px;line-height:26px;letter-spacing:-0.183px;">ResourcesConfig.java</div>
<svg style="position:absolute;left:1268px;top:66px" width="9" height="9" viewBox="0 0 9 9" ><path d="M1 1l7 7M8 1L1 8" stroke="#6e7173" stroke-width="1"/></svg>
<svg style="position:absolute;left:1291px;top:63px" width="16" height="16" viewBox="0 0 16 16" ><circle cx="8" cy="8" r="7" fill="#3b8eb5"/><text x="8" y="11.6" text-anchor="middle" font-family="Liberation Sans, sans-serif" font-size="10" fill="#2b2b2b">C</text></svg>
<div class="t u" style="left:1311px;top:59px;height:26px;line-height:26px;letter-spacing:-0.090px;">SysLoginController.java</div>
<svg style="position:absolute;left:1453px;top:66px" width="9" height="9" viewBox="0 0 9 9" ><path d="M1 1l7 7M8 1L1 8" stroke="#6e7173" stroke-width="1"/></svg>
<svg style="position:absolute;left:1476px;top:63px" width="16" height="16" viewBox="0 0 16 16" ><path d="M3.500 5.500l4.500 4.500 4.500-4.500" fill="none" stroke="#c8c8c8" stroke-width="1.500"/></svg>
<svg style="position:absolute;left:1508px;top:63px" width="8" height="16" viewBox="0 0 8 16" ><circle cx="4" cy="3" r="1.400" fill="#c8c8c8"/><circle cx="4" cy="8" r="1.400" fill="#c8c8c8"/><circle cx="4" cy="13" r="1.400" fill="#c8c8c8"/></svg>
<div style="position:absolute;left:496px;top:85px;width:1028px;height:28px;background:#3c3f41;"></div>
<div style="position:absolute;left:496px;top:85px;width:403px;height:28px;background:#45494a;"></div>
<div style="position:absolute;left:899px;top:85px;width:1px;height:28px;background:#3a3d3f;"></div>
<svg style="position:absolute;left:502px;top:91px" width="16" height="16" viewBox="0 0 16 16" ><circle cx="6.500" cy="6.500" r="4.800" fill="none" stroke="#8a8d8f" stroke-width="1.200"/><path d="M10 10l3.500 3.500" stroke="#8a8d8f" stroke-width="1.300"/><path d="M12.500 6.500h4l-2 2.500z" fill="#8a8d8f"/></svg>
<div class="t s" style="left:533.4px;top:86px;height:27px;line-height:27px;color:#ff6464;letter-spacing:0.358px;">resources:</div>
<svg style="position:absolute;left:774px;top:94px" width="9" height="9" viewBox="0 0 9 9" ><path d="M1 1l7 7M8 1L1 8" stroke="#7a7d7f" stroke-width="1"/></svg>
<svg style="position:absolute;left:791px;top:91px" width="16" height="16" viewBox="0 0 16 16" ><path d="M3 3h7a3 3 0 010 6H4" fill="none" stroke="#6e7173" stroke-width="1.200"/><path d="M6.500 6.500L4 9l2.500 2.500" fill="none" stroke="#6e7173" stroke-width="1.200"/></svg>
<div style="position:absolute;left:816px;top:88px;width:1px;height:22px;background:#505355;"></div>
<div style="position:absolute;left:822px;top:88px;width:22px;height:22px;background:#5a5d5f;border-radius:3px"></div>
<div class="t s b" style="left:826px;top:88px;height:22px;line-height:22px;color:#35b5ef;font-size:13px;">Cc</div>
<div class="t s b" style="left:852px;top:88px;height:22px;line-height:22px;color:#7a7d7f;font-size:13px;">W</div>
<div class="t s b" style="left:878px;top:88px;height:22px;line-height:22px;color:#7a7d7f;font-size:13px;">.*</div>
<div class="t s" style="left:925.5px;top:86px;height:27px;line-height:27px;color:#ff6464;font-size:11px;">0 <span class="c" style="font-size:10.5px">个结果</span></div>
<svg style="position:absolute;left:984px;top:91px" width="16" height="16" viewBox="0 0 16 16" ><path d="M8 13V3.500M4 7.500l4-4 4 4" fill="none" stroke="#5e6163" stroke-width="1.300"/></svg>
<svg style="position:absolute;left:1010px;top:91px" width="16" height="16" viewBox="0 0 16 16" ><path d="M8 3v9.500M4 8.500l4 4 4-4" fill="none" stroke="#5e6163" stroke-width="1.300"/></svg>
<svg style="position:absolute;left:1036px;top:91px" width="16" height="16" viewBox="0 0 16 16" ><rect x="2.500" y="3.500" width="11" height="9" fill="none" stroke="#5e6163"/><rect x="3" y="8" width="5" height="4.500" fill="#5e6163"/></svg>
<div style="position:absolute;left:1060px;top:89px;width:1px;height:20px;background:#505355;"></div>
<svg style="position:absolute;left:1069px;top:91px" width="18" height="16" viewBox="0 0 18 16" ><path d="M5 3v8M1 7h8" stroke="#5e6163" stroke-width="1.300"/><path d="M11 8h4M13 8v7M11 15h4" stroke="#5e6163" stroke-width="1"/></svg>
<svg style="position:absolute;left:1095px;top:91px" width="18" height="16" viewBox="0 0 18 16" ><path d="M1 7h8" stroke="#5e6163" stroke-width="1.300"/><path d="M11 8h4M13 8v7M11 15h4" stroke="#5e6163" stroke-width="1"/></svg>
<svg style="position:absolute;left:1121px;top:91px" width="18" height="16" viewBox="0 0 18 16" ><rect x="1" y="2" width="8" height="7" fill="none" stroke="#5e6163"/><path d="M2.500 5.500l2 2L9 2.500" fill="none" stroke="#5e6163" stroke-width="1.200"/><path d="M11 8h4M13 8v7M11 15h4" stroke="#5e6163" stroke-width="1"/></svg>
<div style="position:absolute;left:1146px;top:89px;width:1px;height:20px;background:#505355;"></div>
<svg style="position:absolute;left:1154px;top:91px" width="16" height="16" viewBox="0 0 16 16" ><path d="M1 4h12M1 8h7M1 12h7" stroke="#c8c8c8" stroke-width="1.500"/><path d="M11 8h4M13 8v6" stroke="#c8c8c8" stroke-width="1.200"/></svg>
<svg style="position:absolute;left:1180px;top:91px" width="16" height="16" viewBox="0 0 16 16" ><path d="M2 2.500h12L9.500 8.500V14l-3-1.500V8.500z" fill="#c8c8c8"/></svg>
<svg style="position:absolute;left:1509px;top:94px" width="9" height="9" viewBox="0 0 9 9" ><path d="M1 1l7 7M8 1L1 8" stroke="#6e7173" stroke-width="1"/></svg>
<div style="position:absolute;left:496px;top:113px;width:1028px;height:669px;background:#2b2b2b;"></div>
<div style="position:absolute;left:496px;top:113px;width:58px;height:669px;background:#313335;"></div>
<div style="position:absolute;left:554px;top:113px;width:1px;height:669px;background:#555555;"></div>
<div style="position:absolute;left:496px;top:781px;width:1028px;height:1px;background:#555555;"></div>
<div style="position:absolute;left:496px;top:782px;width:1028px;height:23px;background:#313335;"></div>
<div style="position:absolute;left:22px;top:805px;width:1876px;height:1px;background:#323232;"></div>
<div style="position:absolute;left:555px;top:654px;width:969px;height:22px;background:#323232;"></div>
<div style="position:absolute;left:592px;top:566px;width:48px;height:22px;background:#52503a;"></div>
<div style="position:absolute;left:576px;top:632px;width:80px;height:22px;background:#52503a;"></div>
<div style="position:absolute;left:496px;top:113px;width:1028px;height:668px;overflow:hidden">
<div class="t ln" style="left:5px;top:-8px;height:22px;line-height:22px;color:#606366;">43</div>
<div class="t m" style="left:64px;top:-8px;height:22px;line-height:22px;color:#a9b7c6">        <span class="k">enabled</span><span class="v">:</span> <span class="k">true</span></div>
<div class="t ln" style="left:5px;top:14px;height:22px;line-height:22px;color:#606366;">44</div>
<div class="t m" style="left:64px;top:14px;height:22px;line-height:22px;color:#a9b7c6">      <span class="k">statViewServlet</span><span class="v">:</span></div>
<div class="t ln" style="left:5px;top:36px;height:22px;line-height:22px;color:#606366;">45</div>
<div class="t m" style="left:64px;top:36px;height:22px;line-height:22px;color:#a9b7c6">        <span class="k">enabled</span><span class="v">:</span> <span class="k">true</span></div>
<div class="t ln" style="left:5px;top:58px;height:22px;line-height:22px;color:#606366;">46</div>
<div class="t m" style="left:64px;top:58px;height:22px;line-height:22px;color:#a9b7c6">        <span class="cm"># <span class="z">设置白名单，不填则允许所有访问</span></span></div>
<div class="t ln" style="left:5px;top:80px;height:22px;line-height:22px;color:#606366;">47</div>
<div class="t m" style="left:64px;top:80px;height:22px;line-height:22px;color:#a9b7c6">        <span class="k">allow</span><span class="v">:</span></div>
<div class="t ln" style="left:5px;top:102px;height:22px;line-height:22px;color:#606366;">48</div>
<div class="t m" style="left:64px;top:102px;height:22px;line-height:22px;color:#a9b7c6">        <span class="k">url-pattern</span><span class="v">:</span> <span class="v">/druid/*</span></div>
<div class="t ln" style="left:5px;top:124px;height:22px;line-height:22px;color:#606366;">49</div>
<div class="t m" style="left:64px;top:124px;height:22px;line-height:22px;color:#a9b7c6">        <span class="cm"># <span class="z">控制台管理用户名和密码</span></span></div>
<div class="t ln" style="left:5px;top:146px;height:22px;line-height:22px;color:#606366;">50</div>
<div class="t m" style="left:64px;top:146px;height:22px;line-height:22px;color:#a9b7c6">        <span class="k">login-username</span><span class="v">:</span> <span class="v">admin</span></div>
<div class="t ln" style="left:5px;top:168px;height:22px;line-height:22px;color:#606366;">51</div>
<div class="t m" style="left:64px;top:168px;height:22px;line-height:22px;color:#a9b7c6">        <span class="k">login-password</span><span class="v">:</span> <span class="v">123456</span></div>
<div class="t ln" style="left:5px;top:190px;height:22px;line-height:22px;color:#606366;">52</div>
<div class="t m" style="left:64px;top:190px;height:22px;line-height:22px;color:#a9b7c6">      <span class="k">filter</span><span class="v">:</span></div>
<div class="t ln" style="left:5px;top:212px;height:22px;line-height:22px;color:#606366;">53</div>
<div class="t m" style="left:64px;top:212px;height:22px;line-height:22px;color:#a9b7c6">        <span class="k">stat</span><span class="v">:</span></div>
<div class="t ln" style="left:5px;top:234px;height:22px;line-height:22px;color:#606366;">54</div>
<div class="t m" style="left:64px;top:234px;height:22px;line-height:22px;color:#a9b7c6">          <span class="k">enabled</span><span class="v">:</span> <span class="k">true</span></div>
<div class="t ln" style="left:5px;top:256px;height:22px;line-height:22px;color:#606366;">55</div>
<div class="t m" style="left:64px;top:256px;height:22px;line-height:22px;color:#a9b7c6">          <span class="cm"># <span class="z">慢</span>SQL<span class="z">记录</span></span></div>
<div class="t ln" style="left:5px;top:278px;height:22px;line-height:22px;color:#606366;">56</div>
<div class="t m" style="left:64px;top:278px;height:22px;line-height:22px;color:#a9b7c6">          <span class="k">log-slow-sql</span><span class="v">:</span> <span class="k">true</span></div>
<div class="t ln" style="left:5px;top:300px;height:22px;line-height:22px;color:#606366;">57</div>
<div class="t m" style="left:64px;top:300px;height:22px;line-height:22px;color:#a9b7c6">          <span class="k">slow-sql-millis</span><span class="v">:</span> <span class="n">1000</span></div>
<div class="t ln" style="left:5px;top:322px;height:22px;line-height:22px;color:#606366;">58</div>
<div class="t m" style="left:64px;top:322px;height:22px;line-height:22px;color:#a9b7c6">          <span class="k">merge-sql</span><span class="v">:</span> <span class="k">true</span></div>
<div class="t ln" style="left:5px;top:344px;height:22px;line-height:22px;color:#606366;">59</div>
<div class="t m" style="left:64px;top:344px;height:22px;line-height:22px;color:#a9b7c6">        <span class="k">wall</span><span class="v">:</span></div>
<div class="t ln" style="left:5px;top:366px;height:22px;line-height:22px;color:#606366;">60</div>
<div class="t m" style="left:64px;top:366px;height:22px;line-height:22px;color:#a9b7c6">          <span class="k">config</span><span class="v">:</span></div>
<div class="t ln" style="left:5px;top:388px;height:22px;line-height:22px;color:#606366;">61</div>
<div class="t m" style="left:64px;top:388px;height:22px;line-height:22px;color:#a9b7c6">            <span class="k">multi-statement-allow</span><span class="v">:</span> <span class="k">true</span></div>
<div class="t ln" style="left:5px;top:410px;height:22px;line-height:22px;color:#606366;">62</div>
<div class="t m" style="left:64px;top:410px;height:22px;line-height:22px;color:#a9b7c6"><span class="k">knife4j</span><span class="v">:</span></div>
<div class="t ln" style="left:5px;top:432px;height:22px;line-height:22px;color:#606366;">63</div>
<div class="t m" style="left:64px;top:432px;height:22px;line-height:22px;color:#a9b7c6">  <span class="k">basic</span><span class="v">:</span></div>
<div class="t ln" style="left:5px;top:454px;height:22px;line-height:22px;color:#606366;">64</div>
<div class="t m" style="left:64px;top:454px;height:22px;line-height:22px;color:#a9b7c6">    <span class="hl"><span class="k">enable</span></span><span class="v">:</span> <span class="v">false</span></div>
<div class="t ln" style="left:5px;top:476px;height:22px;line-height:22px;color:#606366;">65</div>
<div class="t m" style="left:64px;top:476px;height:22px;line-height:22px;color:#a9b7c6"><span class="k">token</span><span class="v">:</span></div>
<div class="t ln" style="left:5px;top:498px;height:22px;line-height:22px;color:#606366;">66</div>
<div class="t m" style="left:64px;top:498px;height:22px;line-height:22px;color:#a9b7c6">  <span class="cm"># 10<span class="z">天</span></span></div>
<div class="t ln" style="left:5px;top:520px;height:22px;line-height:22px;color:#606366;">67</div>
<div class="t m" style="left:64px;top:520px;height:22px;line-height:22px;color:#a9b7c6">  <span class="hl"><span class="k">expireTime</span></span><span class="v">:</span> <span class="v">14400</span></div>
<div class="t ln" style="left:5px;top:542px;height:22px;line-height:22px;color:#606366;color:#a4a3a3;">68</div>
</div>
<div style="position:absolute;left:574px;top:113px;width:1px;height:409px;background:#3b3e40;"></div>
<div style="position:absolute;left:590px;top:113px;width:1px;height:409px;background:#3b3e40;"></div>
<div style="position:absolute;left:606px;top:113px;width:1px;height:13px;background:#3b3e40;"></div>
<div style="position:absolute;left:606px;top:148px;width:1px;height:154px;background:#3b3e40;"></div>
<div style="position:absolute;left:606px;top:324px;width:1px;height:198px;background:#3b3e40;"></div>
<div style="position:absolute;left:622px;top:346px;width:1px;height:110px;background:#3b3e40;"></div>
<div style="position:absolute;left:622px;top:478px;width:1px;height:44px;background:#3b3e40;"></div>
<div style="position:absolute;left:638px;top:500px;width:1px;height:22px;background:#3b3e40;"></div>
<div style="position:absolute;left:574px;top:566px;width:1px;height:22px;background:#3b3e40;"></div>
<div style="position:absolute;left:550px;top:113px;width:9px;height:7px;overflow:hidden"><svg style="position:absolute;left:0px;top:-5px" width="9" height="12" viewBox="0 0 9 12" ><path d="M0.500 11.500h8V5.500l-4-5-4 5z" fill="#313335" stroke="#606366"/><path d="M2.500 7.500h4" stroke="#606366"/></svg></div>
<svg style="position:absolute;left:550px;top:133px" width="9" height="12" viewBox="0 0 9 12" ><path d="M0.500 0.500h8v6l-4 4.500-4-4.500z" fill="#313335" stroke="#606366"/><path d="M2.500 4.5h4" stroke="#606366"/></svg>
<svg style="position:absolute;left:550px;top:284px" width="9" height="12" viewBox="0 0 9 12" ><path d="M0.500 11.500h8V5.500l-4-5-4 5z" fill="#313335" stroke="#606366"/><path d="M2.500 7.5h4" stroke="#606366"/></svg>
<svg style="position:absolute;left:550px;top:309px" width="9" height="12" viewBox="0 0 9 12" ><path d="M0.500 0.500h8v6l-4 4.500-4-4.500z" fill="#313335" stroke="#606366"/><path d="M2.500 4.5h4" stroke="#606366"/></svg>
<svg style="position:absolute;left:550px;top:331px" width="9" height="12" viewBox="0 0 9 12" ><path d="M0.500 0.500h8v6l-4 4.500-4-4.500z" fill="#313335" stroke="#606366"/><path d="M2.500 4.5h4" stroke="#606366"/></svg>
<svg style="position:absolute;left:550px;top:438px" width="9" height="12" viewBox="0 0 9 12" ><path d="M0.500 11.500h8V5.500l-4-5-4 5z" fill="#313335" stroke="#606366"/><path d="M2.500 7.5h4" stroke="#606366"/></svg>
<svg style="position:absolute;left:550px;top:463px" width="9" height="12" viewBox="0 0 9 12" ><path d="M0.500 0.500h8v6l-4 4.500-4-4.500z" fill="#313335" stroke="#606366"/><path d="M2.500 4.5h4" stroke="#606366"/></svg>
<svg style="position:absolute;left:550px;top:485px" width="9" height="12" viewBox="0 0 9 12" ><path d="M0.500 0.500h8v6l-4 4.500-4-4.500z" fill="#313335" stroke="#606366"/><path d="M2.500 4.5h4" stroke="#606366"/></svg>
<svg style="position:absolute;left:550px;top:504px" width="9" height="12" viewBox="0 0 9 12" ><path d="M0.500 11.500h8V5.500l-4-5-4 5z" fill="#313335" stroke="#606366"/><path d="M2.500 7.5h4" stroke="#606366"/></svg>
<svg style="position:absolute;left:550px;top:529px" width="9" height="12" viewBox="0 0 9 12" ><path d="M0.500 0.500h8v6l-4 4.500-4-4.500z" fill="#313335" stroke="#606366"/><path d="M2.500 4.5h4" stroke="#606366"/></svg>
<svg style="position:absolute;left:550px;top:551px" width="9" height="12" viewBox="0 0 9 12" ><path d="M0.500 0.500h8v6l-4 4.500-4-4.500z" fill="#313335" stroke="#606366"/><path d="M2.500 4.5h4" stroke="#606366"/></svg>
<svg style="position:absolute;left:550px;top:570px" width="9" height="12" viewBox="0 0 9 12" ><path d="M0.500 11.500h8V5.500l-4-5-4 5z" fill="#313335" stroke="#606366"/><path d="M2.500 7.5h4" stroke="#606366"/></svg>
<svg style="position:absolute;left:550px;top:595px" width="9" height="12" viewBox="0 0 9 12" ><path d="M0.500 0.500h8v6l-4 4.500-4-4.500z" fill="#313335" stroke="#606366"/><path d="M2.500 4.5h4" stroke="#606366"/></svg>
<svg style="position:absolute;left:550px;top:636px" width="9" height="12" viewBox="0 0 9 12" ><path d="M0.500 11.500h8V5.500l-4-5-4 5z" fill="#313335" stroke="#606366"/><path d="M2.500 7.5h4" stroke="#606366"/></svg>
<svg style="position:absolute;left:1454px;top:121px" width="12" height="11" viewBox="0 0 12 11" ><path d="M6 0.500L11.500 10.500H0.500z" fill="#e2a53a"/><path d="M6 4v3.500M6 8.500v1" stroke="#2b2b2b" stroke-width="1.300"/></svg>
<div class="t s" style="left:1468px;top:118px;height:18px;line-height:18px;color:#bbbbbb;font-size:12px;">9</div>
<svg style="position:absolute;left:1485px;top:122px" width="12" height="10" viewBox="0 0 12 10" ><path d="M2 7l4-4 4 4" fill="none" stroke="#afb1b3" stroke-width="1.300"/></svg>
<svg style="position:absolute;left:1506px;top:122px" width="12" height="10" viewBox="0 0 12 10" ><path d="M2 3l4 4 4-4" fill="none" stroke="#afb1b3" stroke-width="1.300"/></svg>
<div style="position:absolute;left:1520px;top:138px;width:1px;height:643px;background:#444444;"></div>
<div style="position:absolute;left:1510px;top:244px;width:14px;height:2px;background:#d0a020;"></div>
<div style="position:absolute;left:1510px;top:253px;width:14px;height:2px;background:#d0a020;"></div>
<div style="position:absolute;left:1510px;top:261px;width:14px;height:2px;background:#d0a020;"></div>
<div style="position:absolute;left:1510px;top:296px;width:14px;height:2px;background:#d0a020;"></div>
<div style="position:absolute;left:1510px;top:305px;width:14px;height:2px;background:#d0a020;"></div>
<div style="position:absolute;left:1510px;top:314px;width:14px;height:2px;background:#d0a020;"></div>
<div style="position:absolute;left:1510px;top:322px;width:14px;height:2px;background:#d0a020;"></div>
<div style="position:absolute;left:1510px;top:688px;width:14px;height:2px;background:#d0a020;"></div>
<div style="position:absolute;left:1510px;top:714px;width:14px;height:2px;background:#d0a020;"></div>
<div style="position:absolute;left:1506px;top:209px;width:2px;height:35px;background:#4b7cb8;"></div>
<div style="position:absolute;left:1506px;top:260px;width:2px;height:5px;background:#4b7cb8;"></div>
<div style="position:absolute;left:1515px;top:511px;width:8px;height:261px;background:rgba(140,140,140,0.3);"></div>
<div style="position:absolute;left:561px;top:772px;width:656px;height:8px;background:#4f4f4f;"></div>
<div style="position:absolute;left:1524px;top:58px;width:1px;height:748px;background:#323232;"></div>
<div style="position:absolute;left:1525px;top:84px;width:373px;height:1px;background:#323232;"></div>
<div style="position:absolute;left:1525px;top:113px;width:373px;height:1px;background:#323232;"></div>
<div class="t u" style="left:1531.4px;top:59px;height:26px;line-height:26px;letter-spacing:-0.063px;">Maven</div>
<svg style="position:absolute;left:1851px;top:63px" width="16" height="16" viewBox="0 0 16 16" ><g><path d="M6.18 4.10L6.69 1.50H9.31L9.82 4.10z" transform="rotate(0.0 8 8)" fill="#afb1b3"/><path d="M6.18 4.10L6.69 1.50H9.31L9.82 4.10z" transform="rotate(60.0 8 8)" fill="#afb1b3"/><path d="M6.18 4.10L6.69 1.50H9.31L9.82 4.10z" transform="rotate(120.0 8 8)" fill="#afb1b3"/><path d="M6.18 4.10L6.69 1.50H9.31L9.82 4.10z" transform="rotate(180.0 8 8)" fill="#afb1b3"/><path d="M6.18 4.10L6.69 1.50H9.31L9.82 4.10z" transform="rotate(240.0 8 8)" fill="#afb1b3"/><path d="M6.18 4.10L6.69 1.50H9.31L9.82 4.10z" transform="rotate(300.0 8 8)" fill="#afb1b3"/><circle cx="8" cy="8" r="4.81" fill="#afb1b3"/></g><circle cx="8" cy="8" r="2.21" fill="#3c3f41"/></svg>
<div style="position:absolute;left:1880px;top:70px;width:11px;height:2px;background:#afb1b3;"></div>
<svg style="position:absolute;left:1532px;top:91px" width="16" height="16" viewBox="0 0 16 16" ><path d="M13.500 8a5.500 5.500 0 01-10 3M2.500 8a5.500 5.500 0 0110-3" fill="none" stroke="#afb1b3" stroke-width="2"/><path d="M14 1.500v5h-5zM2 14.500v-5h5z" fill="#afb1b3"/></svg>
<svg style="position:absolute;left:1557px;top:91px" width="18" height="16" viewBox="0 0 18 16" ><path d="M1 2h5l1.500 2H13v5H9v4H1z" fill="#afb1b3"/><circle cx="13" cy="12" r="3" fill="none" stroke="#afb1b3" stroke-width="1.200"/><path d="M13 7.500l2 2-2 1z" fill="#afb1b3"/></svg>
<svg style="position:absolute;left:1585px;top:91px" width="18" height="16" viewBox="0 0 18 16" ><path d="M7 1v8M3.500 6L7 9.500 10.500 6" fill="none" stroke="#afb1b3" stroke-width="1.600"/><path d="M1 13h12" stroke="#afb1b3" stroke-width="1.600"/><path d="M10.500 13h6l-3 3z" fill="#c8c8c8"/></svg>
<div style="position:absolute;left:1608px;top:89px;width:1px;height:20px;background:#515151;"></div>
<svg style="position:absolute;left:1617px;top:91px" width="16" height="16" viewBox="0 0 16 16" ><path d="M8 3v10M3 8h10" stroke="#c8c8c8" stroke-width="1.600"/></svg>
<div style="position:absolute;left:1641px;top:89px;width:1px;height:20px;background:#515151;"></div>
<svg style="position:absolute;left:1650px;top:91px" width="16" height="16" viewBox="0 0 16 16" ><path d="M4 2l10 6-10 6z" fill="#499c54"/></svg>
<svg style="position:absolute;left:1675px;top:91px" width="16" height="16" viewBox="0 0 16 16" ><rect x="1.500" y="3" width="13" height="10.500" fill="none" stroke="#afb1b3" stroke-width="1.400"/><rect x="1.500" y="3" width="13" height="2" fill="#afb1b3"/><path d="M5 7l4 2.500L5 12z" fill="#499c54"/></svg>
<svg style="position:absolute;left:1701px;top:91px" width="16" height="16" viewBox="0 0 16 16" ><path d="M7 2L5 14M11 2L9 14" stroke="#afb1b3" stroke-width="1.800"/><path d="M1 8h5.500M9.500 8H15" stroke="#afb1b3" stroke-width="2.600"/></svg>
<svg style="position:absolute;left:1727px;top:91px" width="16" height="16" viewBox="0 0 16 16" ><circle cx="8" cy="8" r="5.500" fill="none" stroke="#afb1b3" stroke-width="2"/><path d="M4.500 11.500l7-7" stroke="#afb1b3" stroke-width="2"/></svg>
<svg style="position:absolute;left:1753px;top:91px" width="16" height="16" viewBox="0 0 16 16" ><path d="M2 8h12" stroke="#afb1b3" stroke-width="1.500"/><path d="M8 6L5 2.500h6zM8 10l-3 3.500h6z" fill="#afb1b3"/></svg>
<div style="position:absolute;left:1778px;top:89px;width:1px;height:20px;background:#515151;"></div>
<svg style="position:absolute;left:1786px;top:91px" width="18" height="16" viewBox="0 0 18 16" ><circle cx="9" cy="7" r="5" fill="none" stroke="#afb1b3" stroke-width="1.700"/><path d="M12.500 10.500L16 14" stroke="#afb1b3" stroke-width="2"/><rect x="1" y="10" width="2" height="5" fill="#40b6e0"/><rect x="4" y="7" width="2" height="8" fill="#62b543"/><rect x="7" y="11" width="2" height="4" fill="#40b6e0"/></svg>
<svg style="position:absolute;left:1813px;top:91px" width="16" height="16" viewBox="0 0 16 16" ><path d="M1 2.500h14M1 13.500h14" stroke="#afb1b3" stroke-width="2.400"/><path d="M5 5l-2.500 3h1.800v4h1.400V8h1.800zM11 5L8.500 8h1.800v4h1.400V8h1.800z" fill="#40b6e0"/></svg>
<div style="position:absolute;left:1837px;top:89px;width:1px;height:20px;background:#515151;"></div>
<svg style="position:absolute;left:1845px;top:91px" width="18" height="16" viewBox="0 0 18 16" ><path d="M13.500 1.500a3.800 3.800 0 00-4.800 4.800L2 13l2 2 6.500-6.700a3.800 3.800 0 004.800-4.800L13 6l-2-2z" fill="#afb1b3"/><path d="M11.500 13h6l-3 3z" fill="#c8c8c8"/></svg>
<div style="position:absolute;left:1525px;top:354px;width:373px;height:20px;background:#0d293e;"></div>
<svg style="position:absolute;left:1529px;top:116px" width="16" height="16" viewBox="0 0 16 16" ><path d="M3.5 6l4.5 4.5L12.5 6" fill="none" stroke="#9da0a2" stroke-width="1.3"/></svg>
<svg style="position:absolute;left:1550px;top:116px" width="16" height="16" viewBox="0 0 16 16" ><path d="M1 1.5h5.2l1.6 2H15v4.5L9 11.5H1z" fill="#87939a"/><path d="M7 10.5l2.6 2.8L15.3 7" fill="none" stroke="#40b6e0" stroke-width="2"/></svg>
<div class="t c" style="left:1568px;top:115px;height:20px;line-height:20px;">配置文件</div>
<div style="position:absolute;left:1568px;top:137px;width:14px;height:14px;border:1px solid #6b6b6b;border-radius:2px;background:#43494a"></div>
<svg style="position:absolute;left:1568px;top:137px" width="14" height="14" viewBox="0 0 14 14" ><path d="M3 7l3 3 5-6.500" fill="none" stroke="#bbbbbb" stroke-width="1.700"/></svg>
<div class="t u" style="left:1586.3px;top:135px;height:20px;line-height:20px;letter-spacing:0.126px;">jdk-1.8</div>
<div style="position:absolute;left:1568px;top:157px;width:14px;height:14px;border:1px solid #6b6b6b;border-radius:2px;background:#43494a"></div>
<svg style="position:absolute;left:1568px;top:157px" width="14" height="14" viewBox="0 0 14 14" ><path d="M3 7l3 3 5-6.500" fill="none" stroke="#bbbbbb" stroke-width="1.700"/></svg>
<div class="t u" style="left:1586.3px;top:155px;height:20px;line-height:20px;letter-spacing:-0.087px;">local</div>
<div style="position:absolute;left:1568px;top:177px;width:14px;height:14px;border:1px solid #6b6b6b;border-radius:2px;background:#43494a"></div>
<div class="t u" style="left:1586.3px;top:175px;height:20px;line-height:20px;letter-spacing:-0.069px;">mysql</div>
<div style="position:absolute;left:1568px;top:197px;width:14px;height:14px;border:1px solid #6b6b6b;border-radius:2px;background:#43494a"></div>
<div class="t u" style="left:1586.3px;top:195px;height:20px;line-height:20px;letter-spacing:0.546px;">prod</div>
<div style="position:absolute;left:1568px;top:217px;width:14px;height:14px;border:1px solid #6b6b6b;border-radius:2px;background:#43494a"></div>
<div class="t u" style="left:1586.3px;top:215px;height:20px;line-height:20px;letter-spacing:-0.015px;">sqlserver</div>
<svg style="position:absolute;left:1529px;top:236px" width="16" height="16" viewBox="0 0 16 16" ><path d="M3.5 6l4.5 4.5L12.5 6" fill="none" stroke="#9da0a2" stroke-width="1.3"/></svg>
<svg style="position:absolute;left:1550px;top:236px" width="16" height="16" viewBox="0 0 16 16" ><path d="M7.5 1H4v13h2V8h7V5.5H7.5z" fill="#9aa7b0" opacity=".85"/><path d="M8.5 1L12 4.5H8.5z" fill="#9aa7b0" opacity=".85"/><text x="5.5" y="16" font-family="Liberation Sans, sans-serif" font-size="10" font-weight="bold" font-style="italic" fill="#40b6e0">m</text></svg>
<div class="t u" style="left:1568.5px;top:235px;height:20px;line-height:20px;letter-spacing:-0.733px;">sys</div>
<svg style="position:absolute;left:1547px;top:256px" width="16" height="16" viewBox="0 0 16 16" ><path d="M3.5 6l4.5 4.5L12.5 6" fill="none" stroke="#9da0a2" stroke-width="1.3"/></svg>
<svg style="position:absolute;left:1568px;top:256px" width="16" height="16" viewBox="0 0 16 16" ><path d="M1 2.5h5.2l1.6 2H15v3.5H9.5L7.5 13.5H1z" fill="#87939a"/><g><path d="M10.82 9.48L11.15 7.80H12.85L13.18 9.48z" transform="rotate(0.0 12 12)" fill="#40b6e0"/><path d="M10.82 9.48L11.15 7.80H12.85L13.18 9.48z" transform="rotate(60.0 12 12)" fill="#40b6e0"/><path d="M10.82 9.48L11.15 7.80H12.85L13.18 9.48z" transform="rotate(120.0 12 12)" fill="#40b6e0"/><path d="M10.82 9.48L11.15 7.80H12.85L13.18 9.48z" transform="rotate(180.0 12 12)" fill="#40b6e0"/><path d="M10.82 9.48L11.15 7.80H12.85L13.18 9.48z" transform="rotate(240.0 12 12)" fill="#40b6e0"/><path d="M10.82 9.48L11.15 7.80H12.85L13.18 9.48z" transform="rotate(300.0 12 12)" fill="#40b6e0"/><circle cx="12" cy="12" r="3.11" fill="#40b6e0"/></g><circle cx="12" cy="12" r="1.40" fill="var(--hole,#3c3f41)"/></svg>
<div class="t c" style="left:1586px;top:255px;height:20px;line-height:20px;">生命周期</div>
<svg style="position:absolute;left:1586px;top:276px" width="15" height="15" viewBox="0 0 16 16" ><g><path d="M6.10 3.92L6.63 1.20H9.37L9.90 3.92z" transform="rotate(0.0 8 8)" fill="#9da0a2"/><path d="M6.10 3.92L6.63 1.20H9.37L9.90 3.92z" transform="rotate(60.0 8 8)" fill="#9da0a2"/><path d="M6.10 3.92L6.63 1.20H9.37L9.90 3.92z" transform="rotate(120.0 8 8)" fill="#9da0a2"/><path d="M6.10 3.92L6.63 1.20H9.37L9.90 3.92z" transform="rotate(180.0 8 8)" fill="#9da0a2"/><path d="M6.10 3.92L6.63 1.20H9.37L9.90 3.92z" transform="rotate(240.0 8 8)" fill="#9da0a2"/><path d="M6.10 3.92L6.63 1.20H9.37L9.90 3.92z" transform="rotate(300.0 8 8)" fill="#9da0a2"/><circle cx="8" cy="8" r="5.03" fill="#9da0a2"/></g><circle cx="8" cy="8" r="2.31" fill="#3c3f41"/></svg>
<div class="t u" style="left:1604.2px;top:275px;height:20px;line-height:20px;letter-spacing:-0.355px;">clean</div>
<svg style="position:absolute;left:1586px;top:296px" width="15" height="15" viewBox="0 0 16 16" ><g><path d="M6.10 3.92L6.63 1.20H9.37L9.90 3.92z" transform="rotate(0.0 8 8)" fill="#9da0a2"/><path d="M6.10 3.92L6.63 1.20H9.37L9.90 3.92z" transform="rotate(60.0 8 8)" fill="#9da0a2"/><path d="M6.10 3.92L6.63 1.20H9.37L9.90 3.92z" transform="rotate(120.0 8 8)" fill="#9da0a2"/><path d="M6.10 3.92L6.63 1.20H9.37L9.90 3.92z" transform="rotate(180.0 8 8)" fill="#9da0a2"/><path d="M6.10 3.92L6.63 1.20H9.37L9.90 3.92z" transform="rotate(240.0 8 8)" fill="#9da0a2"/><path d="M6.10 3.92L6.63 1.20H9.37L9.90 3.92z" transform="rotate(300.0 8 8)" fill="#9da0a2"/><circle cx="8" cy="8" r="5.03" fill="#9da0a2"/></g><circle cx="8" cy="8" r="2.31" fill="#3c3f41"/></svg>
<div class="t u" style="left:1604.2px;top:295px;height:20px;line-height:20px;letter-spacing:-0.051px;">validate</div>
<svg style="position:absolute;left:1586px;top:316px" width="15" height="15" viewBox="0 0 16 16" ><g><path d="M6.10 3.92L6.63 1.20H9.37L9.90 3.92z" transform="rotate(0.0 8 8)" fill="#9da0a2"/><path d="M6.10 3.92L6.63 1.20H9.37L9.90 3.92z" transform="rotate(60.0 8 8)" fill="#9da0a2"/><path d="M6.10 3.92L6.63 1.20H9.37L9.90 3.92z" transform="rotate(120.0 8 8)" fill="#9da0a2"/><path d="M6.10 3.92L6.63 1.20H9.37L9.90 3.92z" transform="rotate(180.0 8 8)" fill="#9da0a2"/><path d="M6.10 3.92L6.63 1.20H9.37L9.90 3.92z" transform="rotate(240.0 8 8)" fill="#9da0a2"/><path d="M6.10 3.92L6.63 1.20H9.37L9.90 3.92z" transform="rotate(300.0 8 8)" fill="#9da0a2"/><circle cx="8" cy="8" r="5.03" fill="#9da0a2"/></g><circle cx="8" cy="8" r="2.31" fill="#3c3f41"/></svg>
<div class="t u" style="left:1604.2px;top:315px;height:20px;line-height:20px;letter-spacing:0.101px;">compile</div>
<svg style="position:absolute;left:1586px;top:336px" width="15" height="15" viewBox="0 0 16 16" ><g><path d="M6.10 3.92L6.63 1.20H9.37L9.90 3.92z" transform="rotate(0.0 8 8)" fill="#9da0a2"/><path d="M6.10 3.92L6.63 1.20H9.37L9.90 3.92z" transform="rotate(60.0 8 8)" fill="#9da0a2"/><path d="M6.10 3.92L6.63 1.20H9.37L9.90 3.92z" transform="rotate(120.0 8 8)" fill="#9da0a2"/><path d="M6.10 3.92L6.63 1.20H9.37L9.90 3.92z" transform="rotate(180.0 8 8)" fill="#9da0a2"/><path d="M6.10 3.92L6.63 1.20H9.37L9.90 3.92z" transform="rotate(240.0 8 8)" fill="#9da0a2"/><path d="M6.10 3.92L6.63 1.20H9.37L9.90 3.92z" transform="rotate(300.0 8 8)" fill="#9da0a2"/><circle cx="8" cy="8" r="5.03" fill="#9da0a2"/></g><circle cx="8" cy="8" r="2.31" fill="#3c3f41"/></svg>
<div class="t u" style="left:1604.2px;top:335px;height:20px;line-height:20px;letter-spacing:-0.088px;">test</div>
<svg style="position:absolute;left:1586px;top:356px" width="15" height="15" viewBox="0 0 16 16" ><g><path d="M6.10 3.92L6.63 1.20H9.37L9.90 3.92z" transform="rotate(0.0 8 8)" fill="#9da0a2"/><path d="M6.10 3.92L6.63 1.20H9.37L9.90 3.92z" transform="rotate(60.0 8 8)" fill="#9da0a2"/><path d="M6.10 3.92L6.63 1.20H9.37L9.90 3.92z" transform="rotate(120.0 8 8)" fill="#9da0a2"/><path d="M6.10 3.92L6.63 1.20H9.37L9.90 3.92z" transform="rotate(180.0 8 8)" fill="#9da0a2"/><path d="M6.10 3.92L6.63 1.20H9.37L9.90 3.92z" transform="rotate(240.0 8 8)" fill="#9da0a2"/><path d="M6.10 3.92L6.63 1.20H9.37L9.90 3.92z" transform="rotate(300.0 8 8)" fill="#9da0a2"/><circle cx="8" cy="8" r="5.03" fill="#9da0a2"/></g><circle cx="8" cy="8" r="2.31" fill="#0d293e"/></svg>
<div class="t u" style="left:1604.2px;top:355px;height:20px;line-height:20px;letter-spacing:0.065px;">package</div>
<svg style="position:absolute;left:1586px;top:376px" width="15" height="15" viewBox="0 0 16 16" ><g><path d="M6.10 3.92L6.63 1.20H9.37L9.90 3.92z" transform="rotate(0.0 8 8)" fill="#9da0a2"/><path d="M6.10 3.92L6.63 1.20H9.37L9.90 3.92z" transform="rotate(60.0 8 8)" fill="#9da0a2"/><path d="M6.10 3.92L6.63 1.20H9.37L9.90 3.92z" transform="rotate(120.0 8 8)" fill="#9da0a2"/><path d="M6.10 3.92L6.63 1.20H9.37L9.90 3.92z" transform="rotate(180.0 8 8)" fill="#9da0a2"/><path d="M6.10 3.92L6.63 1.20H9.37L9.90 3.92z" transform="rotate(240.0 8 8)" fill="#9da0a2"/><path d="M6.10 3.92L6.63 1.20H9.37L9.90 3.92z" transform="rotate(300.0 8 8)" fill="#9da0a2"/><circle cx="8" cy="8" r="5.03" fill="#9da0a2"/></g><circle cx="8" cy="8" r="2.31" fill="#3c3f41"/></svg>
<div class="t u" style="left:1604.2px;top:375px;height:20px;line-height:20px;letter-spacing:-0.076px;">verify</div>
<svg style="position:absolute;left:1586px;top:396px" width="15" height="15" viewBox="0 0 16 16" ><g><path d="M6.10 3.92L6.63 1.20H9.37L9.90 3.92z" transform="rotate(0.0 8 8)" fill="#9da0a2"/><path d="M6.10 3.92L6.63 1.20H9.37L9.90 3.92z" transform="rotate(60.0 8 8)" fill="#9da0a2"/><path d="M6.10 3.92L6.63 1.20H9.37L9.90 3.92z" transform="rotate(120.0 8 8)" fill="#9da0a2"/><path d="M6.10 3.92L6.63 1.20H9.37L9.90 3.92z" transform="rotate(180.0 8 8)" fill="#9da0a2"/><path d="M6.10 3.92L6.63 1.20H9.37L9.90 3.92z" transform="rotate(240.0 8 8)" fill="#9da0a2"/><path d="M6.10 3.92L6.63 1.20H9.37L9.90 3.92z" transform="rotate(300.0 8 8)" fill="#9da0a2"/><circle cx="8" cy="8" r="5.03" fill="#9da0a2"/></g><circle cx="8" cy="8" r="2.31" fill="#3c3f41"/></svg>
<div class="t u" style="left:1604.2px;top:395px;height:20px;line-height:20px;letter-spacing:-0.105px;">install</div>
<svg style="position:absolute;left:1586px;top:416px" width="15" height="15" viewBox="0 0 16 16" ><g><path d="M6.10 3.92L6.63 1.20H9.37L9.90 3.92z" transform="rotate(0.0 8 8)" fill="#9da0a2"/><path d="M6.10 3.92L6.63 1.20H9.37L9.90 3.92z" transform="rotate(60.0 8 8)" fill="#9da0a2"/><path d="M6.10 3.92L6.63 1.20H9.37L9.90 3.92z" transform="rotate(120.0 8 8)" fill="#9da0a2"/><path d="M6.10 3.92L6.63 1.20H9.37L9.90 3.92z" transform="rotate(180.0 8 8)" fill="#9da0a2"/><path d="M6.10 3.92L6.63 1.20H9.37L9.90 3.92z" transform="rotate(240.0 8 8)" fill="#9da0a2"/><path d="M6.10 3.92L6.63 1.20H9.37L9.90 3.92z" transform="rotate(300.0 8 8)" fill="#9da0a2"/><circle cx="8" cy="8" r="5.03" fill="#9da0a2"/></g><circle cx="8" cy="8" r="2.31" fill="#3c3f41"/></svg>
<div class="t u" style="left:1604.2px;top:415px;height:20px;line-height:20px;letter-spacing:-0.182px;">site</div>
<svg style="position:absolute;left:1586px;top:436px" width="15" height="15" viewBox="0 0 16 16" ><g><path d="M6.10 3.92L6.63 1.20H9.37L9.90 3.92z" transform="rotate(0.0 8 8)" fill="#9da0a2"/><path d="M6.10 3.92L6.63 1.20H9.37L9.90 3.92z" transform="rotate(60.0 8 8)" fill="#9da0a2"/><path d="M6.10 3.92L6.63 1.20H9.37L9.90 3.92z" transform="rotate(120.0 8 8)" fill="#9da0a2"/><path d="M6.10 3.92L6.63 1.20H9.37L9.90 3.92z" transform="rotate(180.0 8 8)" fill="#9da0a2"/><path d="M6.10 3.92L6.63 1.20H9.37L9.90 3.92z" transform="rotate(240.0 8 8)" fill="#9da0a2"/><path d="M6.10 3.92L6.63 1.20H9.37L9.90 3.92z" transform="rotate(300.0 8 8)" fill="#9da0a2"/><circle cx="8" cy="8" r="5.03" fill="#9da0a2"/></g><circle cx="8" cy="8" r="2.31" fill="#3c3f41"/></svg>
<div class="t u" style="left:1604.2px;top:435px;height:20px;line-height:20px;letter-spacing:0.216px;">deploy</div>
<svg style="position:absolute;left:1547px;top:456px" width="16" height="16" viewBox="0 0 16 16" ><path d="M6 3.5l4.5 4.5L6 12.5" fill="none" stroke="#9da0a2" stroke-width="1.3"/></svg>
<svg style="position:absolute;left:1568px;top:456px" width="16" height="16" viewBox="0 0 16 16" ><path d="M1 2.5h5.2l1.6 2H15v3.5H9.5L7.5 13.5H1z" fill="#87939a"/><g><path d="M10.82 9.48L11.15 7.80H12.85L13.18 9.48z" transform="rotate(0.0 12 12)" fill="#40b6e0"/><path d="M10.82 9.48L11.15 7.80H12.85L13.18 9.48z" transform="rotate(60.0 12 12)" fill="#40b6e0"/><path d="M10.82 9.48L11.15 7.80H12.85L13.18 9.48z" transform="rotate(120.0 12 12)" fill="#40b6e0"/><path d="M10.82 9.48L11.15 7.80H12.85L13.18 9.48z" transform="rotate(180.0 12 12)" fill="#40b6e0"/><path d="M10.82 9.48L11.15 7.80H12.85L13.18 9.48z" transform="rotate(240.0 12 12)" fill="#40b6e0"/><path d="M10.82 9.48L11.15 7.80H12.85L13.18 9.48z" transform="rotate(300.0 12 12)" fill="#40b6e0"/><circle cx="12" cy="12" r="3.11" fill="#40b6e0"/></g><circle cx="12" cy="12" r="1.40" fill="var(--hole,#3c3f41)"/></svg>
<div class="t c" style="left:1586px;top:455px;height:20px;line-height:20px;">插件</div>
<svg style="position:absolute;left:1547px;top:476px" width="16" height="16" viewBox="0 0 16 16" ><path d="M6 3.5l4.5 4.5L6 12.5" fill="none" stroke="#9da0a2" stroke-width="1.3"/></svg>
<svg style="position:absolute;left:1568px;top:476px" width="16" height="16" viewBox="0 0 16 16" ><path d="M7.5 1H4v13h2V8h7V5.5H7.5z" fill="#9aa7b0" opacity=".85"/><path d="M8.5 1L12 4.5H8.5z" fill="#9aa7b0" opacity=".85"/><text x="5.5" y="16" font-family="Liberation Sans, sans-serif" font-size="10" font-weight="bold" font-style="italic" fill="#40b6e0">m</text></svg>
<div class="t u" style="left:1586.3px;top:475px;height:20px;line-height:20px;letter-spacing:-0.081px;">sys-admin</div>
<svg style="position:absolute;left:1547px;top:496px" width="16" height="16" viewBox="0 0 16 16" ><path d="M6 3.5l4.5 4.5L6 12.5" fill="none" stroke="#9da0a2" stroke-width="1.3"/></svg>
<svg style="position:absolute;left:1568px;top:496px" width="16" height="16" viewBox="0 0 16 16" ><path d="M7.5 1H4v13h2V8h7V5.5H7.5z" fill="#9aa7b0" opacity=".85"/><path d="M8.5 1L12 4.5H8.5z" fill="#9aa7b0" opacity=".85"/><text x="5.5" y="16" font-family="Liberation Sans, sans-serif" font-size="10" font-weight="bold" font-style="italic" fill="#40b6e0">m</text></svg>
<div class="t u" style="left:1586.3px;top:495px;height:20px;line-height:20px;letter-spacing:-0.101px;">sys-basedata</div>
<svg style="position:absolute;left:1547px;top:516px" width="16" height="16" viewBox="0 0 16 16" ><path d="M6 3.5l4.5 4.5L6 12.5" fill="none" stroke="#9da0a2" stroke-width="1.3"/></svg>
<svg style="position:absolute;left:1568px;top:516px" width="16" height="16" viewBox="0 0 16 16" ><path d="M7.5 1H4v13h2V8h7V5.5H7.5z" fill="#9aa7b0" opacity=".85"/><path d="M8.5 1L12 4.5H8.5z" fill="#9aa7b0" opacity=".85"/><text x="5.5" y="16" font-family="Liberation Sans, sans-serif" font-size="10" font-weight="bold" font-style="italic" fill="#40b6e0">m</text></svg>
<div class="t u" style="left:1586.3px;top:515px;height:20px;line-height:20px;letter-spacing:-0.027px;">sys-common</div>
<svg style="position:absolute;left:1547px;top:536px" width="16" height="16" viewBox="0 0 16 16" ><path d="M6 3.5l4.5 4.5L6 12.5" fill="none" stroke="#9da0a2" stroke-width="1.3"/></svg>
<svg style="position:absolute;left:1568px;top:536px" width="16" height="16" viewBox="0 0 16 16" ><path d="M7.5 1H4v13h2V8h7V5.5H7.5z" fill="#9aa7b0" opacity=".85"/><path d="M8.5 1L12 4.5H8.5z" fill="#9aa7b0" opacity=".85"/><text x="5.5" y="16" font-family="Liberation Sans, sans-serif" font-size="10" font-weight="bold" font-style="italic" fill="#40b6e0">m</text></svg>
<div class="t u" style="left:1586.3px;top:535px;height:20px;line-height:20px;letter-spacing:0.084px;">sys-framework</div>
<svg style="position:absolute;left:1547px;top:556px" width="16" height="16" viewBox="0 0 16 16" ><path d="M6 3.5l4.5 4.5L6 12.5" fill="none" stroke="#9da0a2" stroke-width="1.3"/></svg>
<svg style="position:absolute;left:1568px;top:556px" width="16" height="16" viewBox="0 0 16 16" ><path d="M7.5 1H4v13h2V8h7V5.5H7.5z" fill="#9aa7b0" opacity=".85"/><path d="M8.5 1L12 4.5H8.5z" fill="#9aa7b0" opacity=".85"/><text x="5.5" y="16" font-family="Liberation Sans, sans-serif" font-size="10" font-weight="bold" font-style="italic" fill="#40b6e0">m</text></svg>
<div class="t u" style="left:1586.3px;top:555px;height:20px;line-height:20px;letter-spacing:0.079px;">sys-generator</div>
<svg style="position:absolute;left:1547px;top:576px" width="16" height="16" viewBox="0 0 16 16" ><path d="M6 3.5l4.5 4.5L6 12.5" fill="none" stroke="#9da0a2" stroke-width="1.3"/></svg>
<svg style="position:absolute;left:1568px;top:576px" width="16" height="16" viewBox="0 0 16 16" ><path d="M7.5 1H4v13h2V8h7V5.5H7.5z" fill="#9aa7b0" opacity=".85"/><path d="M8.5 1L12 4.5H8.5z" fill="#9aa7b0" opacity=".85"/><text x="5.5" y="16" font-family="Liberation Sans, sans-serif" font-size="10" font-weight="bold" font-style="italic" fill="#40b6e0">m</text></svg>
<div class="t u" style="left:1586.3px;top:575px;height:20px;line-height:20px;letter-spacing:-0.208px;">sys-oss</div>
<svg style="position:absolute;left:1547px;top:596px" width="16" height="16" viewBox="0 0 16 16" ><path d="M6 3.5l4.5 4.5L6 12.5" fill="none" stroke="#9da0a2" stroke-width="1.3"/></svg>
<svg style="position:absolute;left:1568px;top:596px" width="16" height="16" viewBox="0 0 16 16" ><path d="M7.5 1H4v13h2V8h7V5.5H7.5z" fill="#9aa7b0" opacity=".85"/><path d="M8.5 1L12 4.5H8.5z" fill="#9aa7b0" opacity=".85"/><text x="5.5" y="16" font-family="Liberation Sans, sans-serif" font-size="10" font-weight="bold" font-style="italic" fill="#40b6e0">m</text></svg>
<div class="t u" style="left:1586.3px;top:595px;height:20px;line-height:20px;letter-spacing:-0.036px;">sys-quartz</div>
<svg style="position:absolute;left:1547px;top:616px" width="16" height="16" viewBox="0 0 16 16" ><path d="M6 3.5l4.5 4.5L6 12.5" fill="none" stroke="#9da0a2" stroke-width="1.3"/></svg>
<svg style="position:absolute;left:1568px;top:616px" width="16" height="16" viewBox="0 0 16 16" ><path d="M7.5 1H4v13h2V8h7V5.5H7.5z" fill="#9aa7b0" opacity=".85"/><path d="M8.5 1L12 4.5H8.5z" fill="#9aa7b0" opacity=".85"/><text x="5.5" y="16" font-family="Liberation Sans, sans-serif" font-size="10" font-weight="bold" font-style="italic" fill="#40b6e0">m</text></svg>
<div class="t u" style="left:1586.3px;top:615px;height:20px;line-height:20px;letter-spacing:-0.270px;">sys-system</div>
<div style="position:absolute;left:1898px;top:58px;width:1px;height:979px;background:#323232;"></div>
<div style="position:absolute;left:1899px;top:58px;width:21px;height:71px;background:#2d2f30;"></div>
<span style="position:absolute;left:1904px;top:65px;font:italic bold 14px/16px 'Liberation Sans',sans-serif;color:#c8c8c8;letter-spacing:-0.5px">m</span>
<div class="t" style="left:1909px;top:103px;width:0;height:0;overflow:visible"><div class="u" style="position:absolute;white-space:pre;transform:translate(-50%,-50%) rotate(90deg);font-size:12px;line-height:14px;color:#f0f0f0">Maven</div></div>
<svg style="position:absolute;left:1904px;top:140px" width="14" height="14" viewBox="0 0 14 14" ><path d="M7 0.500l5.500 3v7L7 13.500 1.500 10.500v-7z" fill="none" stroke="#c8c8c8" stroke-width="1.600"/><path d="M4 5l3 4 3-4" fill="none" stroke="#c8c8c8" stroke-width="1.400"/></svg>
<div class="t" style="left:1909px;top:178.5px;width:0;height:0;overflow:visible"><div class="c" style="position:absolute;white-space:pre;transform:translate(-50%,-50%) rotate(90deg);font-size:11px;line-height:13px;color:#bbbbbb">通义灵码</div></div>
<svg style="position:absolute;left:1903px;top:221px" width="13" height="15" viewBox="0 0 13 15" ><ellipse cx="6.500" cy="3" rx="5.500" ry="2.500" fill="#afb1b3"/><path d="M1 5c0 3 11 3 11 0v2.500c0 3-11 3-11 0zM1 9c0 3 11 3 11 0v2.500c0 3-11 3-11 0z" fill="#afb1b3"/></svg>
<div class="t" style="left:1909px;top:254px;width:0;height:0;overflow:visible"><div class="c" style="position:absolute;white-space:pre;transform:translate(-50%,-50%) rotate(90deg);font-size:11px;line-height:13px;color:#bbbbbb">数据库</div></div>
<svg style="position:absolute;left:1904px;top:294px" width="12" height="10" viewBox="0 0 12 10" ><g fill="#afb1b3"><rect x="0" y="0" width="3" height="2"/><rect x="4.500" y="0" width="3" height="2"/><rect x="9" y="0" width="3" height="2"/><rect x="0" y="4" width="3" height="2"/><rect x="4.500" y="4" width="3" height="2"/><rect x="9" y="4" width="3" height="2"/><rect x="0" y="8" width="3" height="2"/><rect x="4.500" y="8" width="3" height="2"/><rect x="9" y="8" width="3" height="2"/></g></svg>
<div class="t" style="left:1909px;top:330.5px;width:0;height:0;overflow:visible"><div class="u" style="position:absolute;white-space:pre;transform:translate(-50%,-50%) rotate(90deg);font-size:11.5px;line-height:13.5px;color:#bbbbbb">SciView</div></div>
<svg style="position:absolute;left:1903px;top:368px" width="14" height="14" viewBox="0 0 14 14" ><path d="M7 2a4 4 0 014 4v3l1.500 2h-11L3 9V6a4 4 0 014-4z" fill="#afb1b3"/><rect x="5.500" y="11.500" width="3" height="1.800" fill="#afb1b3"/><circle cx="11" cy="2.500" r="2.300" fill="#e05555"/></svg>
<div class="t" style="left:1909px;top:396px;width:0;height:0;overflow:visible"><div class="c" style="position:absolute;white-space:pre;transform:translate(-50%,-50%) rotate(90deg);font-size:11px;line-height:13px;color:#bbbbbb">通知</div></div>
<div style="position:absolute;left:22px;top:806px;width:1876px;height:26px;background:#3c3f41;"></div>
<div class="t c" style="left:28px;top:807px;height:26px;line-height:26px;">服务</div>
<div style="position:absolute;left:22px;top:832px;width:1876px;height:1px;background:#323232;"></div>
<svg style="position:absolute;left:1819px;top:811px" width="16" height="16" viewBox="0 0 16 16" ><circle cx="8" cy="8" r="6.200" fill="none" stroke="#c8c8c8" stroke-width="1.500"/><path d="M8 1v5M8 10v5M1 8h5M10 8h5" stroke="#c8c8c8" stroke-width="1.500"/></svg>
<div style="position:absolute;left:1843px;top:810px;width:1px;height:18px;background:#515151;"></div>
<svg style="position:absolute;left:1852px;top:811px" width="16" height="16" viewBox="0 0 16 16" ><g><path d="M6.18 4.10L6.69 1.50H9.31L9.82 4.10z" transform="rotate(0.0 8 8)" fill="#c8c8c8"/><path d="M6.18 4.10L6.69 1.50H9.31L9.82 4.10z" transform="rotate(60.0 8 8)" fill="#c8c8c8"/><path d="M6.18 4.10L6.69 1.50H9.31L9.82 4.10z" transform="rotate(120.0 8 8)" fill="#c8c8c8"/><path d="M6.18 4.10L6.69 1.50H9.31L9.82 4.10z" transform="rotate(180.0 8 8)" fill="#c8c8c8"/><path d="M6.18 4.10L6.69 1.50H9.31L9.82 4.10z" transform="rotate(240.0 8 8)" fill="#c8c8c8"/><path d="M6.18 4.10L6.69 1.50H9.31L9.82 4.10z" transform="rotate(300.0 8 8)" fill="#c8c8c8"/><circle cx="8" cy="8" r="4.81" fill="#c8c8c8"/></g><circle cx="8" cy="8" r="2.21" fill="#3c3f41"/></svg>
<div style="position:absolute;left:1880px;top:818px;width:11px;height:2px;background:#c8c8c8;"></div>
<div style="position:absolute;left:50px;top:833px;width:1px;height:204px;background:#323232;"></div>
<svg style="position:absolute;left:28px;top:840px" width="16" height="16" viewBox="0 0 16 16" ><path d="M12 8.500a4.500 4.500 0 11-4.500-4.500H11" fill="none" stroke="#499c54" stroke-width="2"/><path d="M9 0.500l4 3.500-4 3.500z" fill="#499c54"/><rect x="9" y="10" width="5" height="5" fill="#bbbbbb"/></svg>
<svg style="position:absolute;left:28px;top:866px" width="16" height="16" viewBox="0 0 16 16" ><ellipse cx="8" cy="9.300" rx="4" ry="5.300" fill="#499c54"/><path d="M5.200 1.300l1.900 3M10.800 1.300l-1.900 3" stroke="#499c54" stroke-width="1.500"/><path d="M1.900 6.200l2.800 .8M14.100 6.200l-2.800 .8M1.700 9.600h3M14.300 9.600h-3M1.900 13l2.800-.8M14.100 13l-2.800-.8" stroke="#499c54" stroke-width="1.800"/><path d="M5.400 8.300h5.200M5.400 11h5.200" stroke="#3c3f41" stroke-width="1.200"/></svg>
<div style="position:absolute;left:37px;top:876px;width:5px;height:5px;background:#bbbbbb;"></div>
<div style="position:absolute;left:31px;top:895px;width:10px;height:10px;background:#c75450;"></div>
<svg style="position:absolute;left:28px;top:918px" width="16" height="16" viewBox="0 0 16 16" ><path d="M13 1.500a3.800 3.800 0 00-4.800 4.800L1.500 13l2 2 6.500-6.700a3.800 3.800 0 004.800-4.800L12.500 6l-2-2z" fill="#afb1b3"/></svg>
<div style="position:absolute;left:26px;top:942px;width:20px;height:1px;background:#515151;"></div>
<svg style="position:absolute;left:29px;top:951px" width="16" height="16" viewBox="0 0 16 16" ><rect x="2" y="3" width="2.500" height="10" fill="#5e6163"/><path d="M6 3l8 5-8 5z" fill="#5e6163"/></svg>
<svg style="position:absolute;left:28px;top:976px" width="16" height="16" viewBox="0 0 16 16" ><rect x="4" y="3" width="2.500" height="10" fill="#d0d0d0"/><rect x="9" y="3" width="2.500" height="10" fill="#d0d0d0"/></svg>
<div style="position:absolute;left:26px;top:1001px;width:20px;height:1px;background:#515151;"></div>
<div class="t u" style="left:32px;top:1018px;height:16px;line-height:16px;color:#9da0a2;font-size:14px;">»</div>
<svg style="position:absolute;left:58px;top:839px" width="16" height="16" viewBox="0 0 16 16" ><path d="M2 2h12M2 14h12" stroke="#c8c8c8" stroke-width="1.500"/><path d="M8 4L5 7h6zM8 12L5 9h6z" fill="#c8c8c8"/></svg>
<svg style="position:absolute;left:84px;top:839px" width="16" height="16" viewBox="0 0 16 16" ><path d="M2 8h12" stroke="#c8c8c8" stroke-width="1.500"/><path d="M8 6L5 2.500h6zM8 10l-3 3.500h6z" fill="#c8c8c8"/></svg>
<div style="position:absolute;left:108px;top:837px;width:1px;height:20px;background:#515151;"></div>
<svg style="position:absolute;left:117px;top:839px" width="18" height="18" viewBox="0 0 18 18" ><g fill="#c8c8c8"><rect x="2" y="3" width="4" height="4"/><rect x="8" y="3" width="4" height="4"/><rect x="2" y="9" width="4" height="4"/><rect x="8" y="9" width="4" height="4"/></g><path d="M11 14h5l-2.500 2.500z" fill="#c8c8c8"/></svg>
<svg style="position:absolute;left:143px;top:839px" width="18" height="18" viewBox="0 0 18 18" ><path d="M2 2.500h12L9.500 8.500V14l-3-1.500V8.500z" fill="#c8c8c8"/><path d="M11 14h5l-2.500 2.500z" fill="#c8c8c8"/></svg>
<svg style="position:absolute;left:168px;top:839px" width="18" height="16" viewBox="0 0 18 16" ><path d="M2.500 13V5.500a3 3 0 013-3h5a3 3 0 013 3V13" fill="none" stroke="#c8c8c8" stroke-width="1.400"/><path d="M8 5v6M5 8h6" stroke="#c8c8c8" stroke-width="1.400"/><path d="M0.500 13h3M12.500 13h3" stroke="#c8c8c8" stroke-width="1.400"/></svg>
<div style="position:absolute;left:193px;top:837px;width:1px;height:20px;background:#515151;"></div>
<svg style="position:absolute;left:202px;top:839px" width="18" height="18" viewBox="0 0 18 18" ><path d="M8 3v10M3 8h10" stroke="#c8c8c8" stroke-width="1.700"/><path d="M11 14h5l-2.500 2.500z" fill="#c8c8c8"/></svg>
<div style="position:absolute;left:51px;top:860px;width:283px;height:1px;background:#323232;"></div>
<svg style="position:absolute;left:54px;top:863px" width="16" height="16" viewBox="0 0 16 16" ><path d="M3.5 6l4.5 4.5L12.5 6" fill="none" stroke="#9da0a2" stroke-width="1.3"/></svg>
<svg style="position:absolute;left:76px;top:864px" width="16" height="16" viewBox="0 0 16 16" ><path d="M14 1.400C13.600 4.600 12.600 6.400 10.600 7.300L10 11C7.500 13.600 3.500 13.900 1.200 12C-0.200 9.500 1 6.400 4.600 5.400C8 4.600 11.600 4.600 14 1.400z" fill="#5aa846"/><path d="M15.300 11.800l-2.250 3.900h-4.500L6.300 11.800l2.250-3.900h4.500z" fill="#aab9c6" stroke="#3c3f41" stroke-width=".7"/><circle cx="10.800" cy="11.900" r="2" fill="none" stroke="#3c4a58" stroke-width=".9"/><rect x="10.200" y="8.900" width="1.200" height="1.800" fill="#aab9c6"/><rect x="10.450" y="9.400" width=".7" height="2.300" fill="#3c4a58"/></svg>
<div class="t u" style="left:94.3px;top:863px;height:20px;line-height:20px;letter-spacing:0.161px;">Spring Boot</div>
<svg style="position:absolute;left:72px;top:883px" width="16" height="16" viewBox="0 0 16 16" ><path d="M3.5 6l4.5 4.5L12.5 6" fill="none" stroke="#9da0a2" stroke-width="1.3"/></svg>
<svg style="position:absolute;left:94px;top:884px" width="16" height="16" viewBox="0 0 16 16" ><path d="M3 2.500l10 5.500-10 5.500z" fill="#499c54"/></svg>
<div class="t c" style="left:112.5px;top:883px;height:20px;line-height:20px;">正在运行</div>
<div style="position:absolute;left:51px;top:902px;width:282px;height:20px;background:#0d293e;"></div>
<svg style="position:absolute;left:111px;top:904px" width="16" height="16" viewBox="0 0 16 16" ><ellipse cx="8" cy="9.300" rx="4" ry="5.300" fill="#499c54"/><path d="M5.200 1.300l1.900 3M10.800 1.300l-1.900 3" stroke="#499c54" stroke-width="1.500"/><path d="M1.900 6.200l2.800 .8M14.100 6.200l-2.800 .8M1.700 9.600h3M14.300 9.600h-3M1.900 13l2.800-.8M14.100 13l-2.800-.8" stroke="#499c54" stroke-width="1.800"/><path d="M5.400 8.300h5.200M5.400 11h5.200" stroke="#0d293e" stroke-width="1.200"/></svg>
<div class="t u" style="left:130.2px;top:903px;height:20px;line-height:20px;"><b style="color:#e0e0e0;letter-spacing:-0.1px">Application</b><span style="color:#8a8a8a;margin-left:5px;letter-spacing:0.25px">[devtools]</span><span style="color:#589df6;text-decoration:underline;margin-left:5px;letter-spacing:0.1px">:8088/</span></div>
<div style="position:absolute;left:333px;top:833px;width:1px;height:204px;background:#323232;"></div>
<div class="t c" style="left:347px;top:835px;height:26px;line-height:26px;font-size:11px;">调试器</div>
<div class="t c" style="left:405px;top:835px;height:26px;line-height:26px;font-size:11px;">控制台</div>
<div style="position:absolute;left:392px;top:860px;width:59px;height:2px;background:#747a80;"></div>
<svg style="position:absolute;left:462px;top:839px" width="16" height="16" viewBox="0 0 16 16" ><path d="M3 13l5-9 5 9" fill="none" stroke="#d0683a" stroke-width="1.300"/><circle cx="8" cy="3.500" r="2" fill="#d0683a"/><circle cx="3" cy="13" r="2" fill="#d0683a"/><circle cx="13" cy="13" r="2" fill="#d0683a"/></svg>
<div class="t s" style="left:482px;top:834px;height:26px;line-height:26px;">Actuator</div>
<svg style="position:absolute;left:542px;top:841px" width="13" height="12" viewBox="0 0 13 12" ><path d="M0 2h13M0 6h13M0 10h13" stroke="#6e7173" stroke-width="1.700"/></svg>
<div style="position:absolute;left:565px;top:837px;width:1px;height:20px;background:#515151;"></div>
<svg style="position:absolute;left:575px;top:840px" width="14" height="14" viewBox="0 0 14 14" ><path d="M1 7l4-4 4 4" fill="none" stroke="#5a5d5f" stroke-width="1.300"/><path d="M7 6l5 5V6.500z" fill="#5a5d5f"/><path d="M1 12.500h12" stroke="#5a5d5f" stroke-width="1.500"/></svg>
<svg style="position:absolute;left:601px;top:840px" width="14" height="14" viewBox="0 0 14 14" ><path d="M7 0v8M3.500 5L7 8.500 10.500 5" fill="none" stroke="#5a5d5f" stroke-width="1.500"/><path d="M1 12.500h12" stroke="#5a5d5f" stroke-width="1.500"/></svg>
<svg style="position:absolute;left:627px;top:840px" width="14" height="14" viewBox="0 0 14 14" ><path d="M7 9.500v-8M3.500 5L7 1.500 10.500 5" fill="none" stroke="#5a5d5f" stroke-width="1.500"/><path d="M1 12.500h12" stroke="#5a5d5f" stroke-width="1.500"/></svg>
<svg style="position:absolute;left:653px;top:840px" width="16" height="16" viewBox="0 0 16 16" ><path d="M1 1l7 7M8 3v5H3" fill="none" stroke="#5a5d5f" stroke-width="1.500"/><path d="M9.500 7h3M11 7v7M9.500 14h3" stroke="#5a5d5f" stroke-width="1"/></svg>
<div style="position:absolute;left:676px;top:837px;width:1px;height:20px;background:#515151;"></div>
<svg style="position:absolute;left:686px;top:841px" width="13" height="12" viewBox="0 0 13 12" ><rect x="0.500" y="0.500" width="12" height="11" fill="none" stroke="#5a5d5f"/><path d="M0 3.500h13M0 6.500h13M0 9h13M4.500 3v9M8.500 3v9" stroke="#5a5d5f"/></svg>
<svg style="position:absolute;left:712px;top:841px" width="13" height="12" viewBox="0 0 13 12" ><path d="M0 2h5M8 2h5M0 6h13M0 10h5M8 10h5M5 10l3-8" stroke="#5a5d5f" stroke-width="1.500" fill="none"/></svg>
<div style="position:absolute;left:334px;top:862px;width:1537px;height:175px;background:#2b2b2b;"></div>
<svg style="position:absolute;left:1880px;top:840px" width="18" height="18" viewBox="0 0 18 18" ><g fill="#afb1b3"><rect x="1" y="1" width="6" height="5"/><rect x="8" y="1" width="6" height="5"/><rect x="1" y="7" width="13" height="5"/></g><path d="M11 13h5l-2.500 2.500z" fill="#d0d0d0"/></svg>
<svg style="position:absolute;left:1877px;top:868px" width="16" height="16" viewBox="0 0 16 16" ><path d="M8 14V3M4 7l4-4 4 4" fill="none" stroke="#5a5d5f" stroke-width="1.500"/></svg>
<svg style="position:absolute;left:1877px;top:894px" width="16" height="16" viewBox="0 0 16 16" ><path d="M8 2v11M4 9l4 4 4-4" fill="none" stroke="#5a5d5f" stroke-width="1.500"/></svg>
<svg style="position:absolute;left:1877px;top:920px" width="16" height="16" viewBox="0 0 16 16" ><path d="M2 3h12M2 7h9.500a2.500 2.500 0 010 5H9" fill="none" stroke="#afb1b3" stroke-width="1.500"/><path d="M10.500 9.500L8 12l2.500 2.500" fill="none" stroke="#afb1b3" stroke-width="1.500"/><path d="M2 12h3" stroke="#afb1b3" stroke-width="1.500"/></svg>
<div style="position:absolute;left:1874px;top:944px;width:22px;height:22px;background:#5a5d5f;border-radius:3px"></div>
<svg style="position:absolute;left:1877px;top:947px" width="16" height="16" viewBox="0 0 16 16" ><path d="M2 5h4M2 9h4M2 13h12" stroke="#d8d8d8" stroke-width="1.500"/><path d="M11 1v8M8 6.500l3 3 3-3" fill="none" stroke="#d8d8d8" stroke-width="1.500"/></svg>
<svg style="position:absolute;left:1877px;top:973px" width="16" height="16" viewBox="0 0 16 16" ><rect x="4" y="1.500" width="8" height="3.500" fill="#afb1b3"/><rect x="1" y="6" width="14" height="6" fill="#afb1b3"/><rect x="4" y="10" width="8" height="4.500" fill="#afb1b3" stroke="#3c3f41"/></svg>
<svg style="position:absolute;left:1877px;top:999px" width="16" height="16" viewBox="0 0 16 16" ><path d="M3 4h10v10.500H3z" fill="#5a5d5f"/><rect x="2" y="2.500" width="12" height="1.500" fill="#5a5d5f"/><rect x="6" y="1" width="4" height="1.500" fill="#5a5d5f"/></svg>
<div style="position:absolute;left:0px;top:1037px;width:1920px;height:1px;background:#323232;"></div>
<div style="position:absolute;left:900px;top:1038px;width:57px;height:21px;background:#2d2f30;"></div>
<svg style="position:absolute;left:31px;top:1042px" width="12" height="13" viewBox="0 0 12 13" ><path d="M3 1v11M3 8c5 0 6-2 6-5" fill="none" stroke="#afb1b3" stroke-width="1.600"/><circle cx="3" cy="2" r="1.600" fill="#afb1b3"/><circle cx="9" cy="3" r="1.600" fill="#afb1b3"/><circle cx="3" cy="11" r="1.600" fill="#afb1b3"/></svg>
<div class="t s" style="left:47px;top:1038px;height:21px;line-height:21px;color:#bbbbbb;font-size:11.500px;">Git</div>
<svg style="position:absolute;left:81px;top:1042px" width="13" height="13" viewBox="0 0 13 13" ><circle cx="5" cy="5" r="3.800" fill="none" stroke="#afb1b3" stroke-width="1.700"/><path d="M8 8l4 4" stroke="#afb1b3" stroke-width="1.900"/></svg>
<div class="t s" style="left:97px;top:1038px;height:21px;line-height:21px;color:#bbbbbb;font-size:11.500px;"><span class="c">查找</span></div>
<svg style="position:absolute;left:137px;top:1042px" width="13" height="13" viewBox="0 0 13 13" ><path d="M2 1.500l9 5-9 5z" fill="#afb1b3"/></svg>
<div class="t s" style="left:155px;top:1038px;height:21px;line-height:21px;color:#bbbbbb;font-size:11.500px;"><span class="c">运行</span></div>
<svg style="position:absolute;left:194px;top:1042px" width="13" height="13" viewBox="0 0 13 13" ><ellipse cx="6.500" cy="7.500" rx="3.500" ry="4.300" fill="#afb1b3"/><circle cx="6.500" cy="3.200" r="2" fill="#afb1b3"/><path d="M1 4.500l2.500 1.500M12 4.500l-2.500 1.500M.500 8h3M12.500 8h-3M1.500 12l2.500-1.800M11.500 12l-2.500-1.800" stroke="#afb1b3" stroke-width="1.200"/></svg>
<div class="t s" style="left:211px;top:1038px;height:21px;line-height:21px;color:#bbbbbb;font-size:11.500px;"><span class="c">调试</span></div>
<svg style="position:absolute;left:252px;top:1042px" width="14" height="13" viewBox="0 0 14 13" ><path d="M3 11l4-8 4 8" fill="none" stroke="#afb1b3" stroke-width="1.300"/><circle cx="7" cy="2.500" r="2" fill="#afb1b3"/><circle cx="2.500" cy="11" r="2" fill="#afb1b3"/><circle cx="11.500" cy="11" r="2" fill="#afb1b3"/></svg>
<div class="t s" style="left:269px;top:1038px;height:21px;line-height:21px;color:#bbbbbb;font-size:11.500px;"><span class="c">端点</span></div>
<svg style="position:absolute;left:309px;top:1042px" width="14" height="13" viewBox="0 0 14 13" ><circle cx="6" cy="6" r="4.600" fill="none" stroke="#afb1b3" stroke-width="1.400"/><path d="M6 3v3l2 1" stroke="#afb1b3" stroke-width="1.200" fill="none"/><path d="M8 7l5.500 3-5.500 3z" fill="#afb1b3" stroke="#3c3f41" stroke-width=".7"/></svg>
<div class="t s" style="left:327px;top:1038px;height:21px;line-height:21px;color:#bbbbbb;font-size:11.500px;">Profiler</div>
<svg style="position:absolute;left:383px;top:1042px" width="14" height="13" viewBox="0 0 14 13" ><path d="M1 4l4-3.500 3.500 2.500L6.500 5.500 5 4.500z" fill="#afb1b3"/><path d="M6.500 5l6.500 6.500-1.500 1.500-6.500-6.500z" fill="#afb1b3"/></svg>
<div class="t s" style="left:400px;top:1038px;height:21px;line-height:21px;color:#bbbbbb;font-size:11.500px;"><span class="c">构建</span></div>
<svg style="position:absolute;left:444px;top:1042px" width="14" height="13" viewBox="0 0 14 13" ><path d="M7 0.500l6 3-6 3-6-3z" fill="#afb1b3"/><path d="M1 6.500l6 3 6-3M1 9.500l6 3 6-3" fill="none" stroke="#afb1b3" stroke-width="1.300"/></svg>
<div class="t s" style="left:461px;top:1038px;height:21px;line-height:21px;color:#bbbbbb;font-size:11.500px;">Dependencies</div>
<svg style="position:absolute;left:558px;top:1042px" width="14" height="13" viewBox="0 0 14 13" ><path d="M7 0.500l6 3-6 3-6-3z" fill="#afb1b3"/><path d="M1 6.500l6 3 6-3M1 9.500l6 3 6-3" fill="none" stroke="#afb1b3" stroke-width="1.300"/></svg>
<div class="t s" style="left:576px;top:1038px;height:21px;line-height:21px;color:#bbbbbb;font-size:11.500px;">Python <span class="c">软件包</span></div>
<svg style="position:absolute;left:672px;top:1042px" width="12" height="13" viewBox="0 0 12 13" ><g fill="#afb1b3"><rect x="0" y="2" width="2" height="2"/><rect x="3.500" y="2" width="8.500" height="2"/><rect x="0" y="5.500" width="2" height="2"/><rect x="3.500" y="5.500" width="8.500" height="2"/><rect x="0" y="9" width="2" height="2"/><rect x="3.500" y="9" width="8.500" height="2"/></g></svg>
<div class="t s" style="left:687px;top:1038px;height:21px;line-height:21px;color:#bbbbbb;font-size:11.500px;">TODO</div>
<svg style="position:absolute;left:740px;top:1042px" width="12" height="13" viewBox="0 0 12 13" ><circle cx="6" cy="6" r="5.200" fill="#afb1b3"/><path d="M6 2.800v4M6 8v1.500" stroke="#3c3f41" stroke-width="1.500"/></svg>
<div class="t s" style="left:755px;top:1038px;height:21px;line-height:21px;color:#bbbbbb;font-size:11.500px;"><span class="c">问题</span></div>
<svg style="position:absolute;left:796px;top:1042px" width="13" height="13" viewBox="0 0 13 13" ><rect x="0.500" y="1" width="12" height="10.500" fill="#afb1b3"/><path d="M2.500 3.500l3 2.500-3 2.500" fill="none" stroke="#3c3f41" stroke-width="1.200"/><path d="M6.500 9h4" stroke="#3c3f41" stroke-width="1.200"/></svg>
<div class="t s" style="left:812px;top:1038px;height:21px;line-height:21px;color:#bbbbbb;font-size:11.500px;"><span class="c">终端</span></div>
<svg style="position:absolute;left:852px;top:1042px" width="12" height="13" viewBox="0 0 12 13" ><path d="M0 3h11M0 6.500h7M0 10h11" stroke="#afb1b3" stroke-width="1.600"/></svg>
<div class="t s" style="left:869px;top:1038px;height:21px;line-height:21px;color:#bbbbbb;font-size:11.500px;"><span class="c">消息</span></div>
<svg style="position:absolute;left:910px;top:1042px" width="14" height="13" viewBox="0 0 14 13" ><path d="M3 1h7l3 5.500-3 5.500H3L0 6.500z" fill="#d0d0d0"/><path d="M5 3.500l5 3-5 3z" fill="#2d2f30"/><circle cx="11.500" cy="11" r="2" fill="#499c54"/></svg>
<div class="t s" style="left:927px;top:1038px;height:21px;line-height:21px;color:#e8e8e8;font-size:11.500px;"><span class="c">服务</span></div>
<div style="position:absolute;left:0px;top:1059px;width:1920px;height:1px;background:#323232;"></div>
<svg style="position:absolute;left:5px;top:1062px" width="13" height="13" viewBox="0 0 13 13" ><rect x="0.500" y="2.500" width="10" height="10" fill="none" stroke="#9da0a2"/><path d="M2.500 0.500h10v10" fill="none" stroke="#9da0a2"/></svg>
<div class="t s sb" style="left:26.8px;top:1060px;height:19px;line-height:19px;font-size:12px;letter-spacing:0.177px;"><span class="c">成功编译完成</span>2<span class="c">秒</span>96<span class="c">毫秒中</span> 1 <span class="c">个警告</span> (16 <span class="c">分钟 之前</span>)</div>
<div class="t s" style="left:1596.4px;top:1060px;height:19px;line-height:19px;font-size:11.500px;letter-spacing:0.030px;">68:1</div>
<svg style="position:absolute;left:1631px;top:1061px" width="16" height="16" viewBox="0 0 16 16" ><path d="M8 0.500l6.500 3.700v7.600L8 15.500 1.500 11.800V4.200z" fill="#5a4fe0"/><path d="M4 5h8l-4 7zM5 10h6" fill="none" stroke="#fff" stroke-width="1.300"/></svg>
<div class="t" style="left:1660px;top:1059px;font:italic bold 17px/20px 'Liberation Sans',sans-serif;color:#f01818">y</div>
<div class="t s" style="left:1684.4px;top:1060px;height:19px;line-height:19px;font-size:11.500px;letter-spacing:-0.607px;">CRLF</div>
<div class="t s" style="left:1724.5px;top:1060px;height:19px;line-height:19px;font-size:11.500px;letter-spacing:0.205px;">UTF-8</div>
<div class="t s" style="left:1770.5px;top:1060px;height:19px;line-height:19px;font-size:11.500px;letter-spacing:0.702px;">2 <span class="c">个空格</span></div>
<svg style="position:absolute;left:1830px;top:1062px" width="10" height="14" viewBox="0 0 10 14" ><path d="M3 1.500v11M3 9c4.500 0 5-2 5-4.500" fill="none" stroke="#afb1b3" stroke-width="1.400"/><circle cx="3" cy="2" r="1.500" fill="#afb1b3"/><circle cx="8" cy="3.500" r="1.500" fill="#afb1b3"/><circle cx="3" cy="12" r="1.500" fill="#afb1b3"/></svg>
<div class="t s" style="left:1846.4px;top:1060px;height:19px;line-height:19px;font-size:11.500px;letter-spacing:0.693px;">master</div>
<svg style="position:absolute;left:1896px;top:1062px" width="12" height="13" viewBox="0 0 12 13" ><rect x="1" y="6" width="8" height="6.500" fill="#afb1b3"/><path d="M6.500 6V3.500a2.300 2.300 0 014.600 0V5" fill="none" stroke="#afb1b3" stroke-width="1.300"/></svg>
<div style="position:absolute;left:0px;top:1078px;width:1920px;height:2px;background:#2b2b2b;"></div>
<div style="position:absolute;left:49px;top:1078px;width:286px;height:1px;background:#4e4e4e;"></div>
<div style="position:absolute;left:848px;top:1078px;width:49px;height:2px;background:#55585a;"></div>
<div class="t" style="left:1518.5px;top:1026.5px;font-size:36.500px;line-height:44px;color:rgba(255,255,255,.72);text-shadow:0 0 2px rgba(0,0,0,.55),1px 1px 1px rgba(0,0,0,.35);letter-spacing:0.18px">CSDN @夕阳的刻痕425</div>
<div style="position:absolute;left:1898px;top:673px;width:1px;height:176px;background:#3d4042;"></div>
<div style="position:absolute;left:1885px;top:671px;width:45px;height:180px;border-radius:10px;background:rgba(66,70,72,.45);box-shadow:0 0 5px rgba(0,0,0,.22)"></div>
<svg style="position:absolute;left:1896px;top:679px" width="14" height="16" viewBox="0 0 14 16" ><path d="M7 0.500l6 2v6c0 3.500-3 6-6 7-3-1-6-3.500-6-7v-6z" fill="#f0a030" stroke="#5b8def" stroke-width=".8"/><text x="7" y="11.500" text-anchor="middle" font-family="Liberation Sans, sans-serif" font-size="10" font-weight="bold" fill="#fff">1</text></svg>
<div style="position:absolute;left:1890px;top:704px;width:26px;height:1px;background:#4a5a55;"></div>
<div style="position:absolute;left:1898px;top:711px;width:10px;height:30px;border-radius:5px;background:linear-gradient(#555 0,#555 12%,#f09a20 14%,#e0a030 45%,#6cc04a 70%,#28b4c8 100%)"></div>
<div style="position:absolute;left:1890px;top:748px;width:26px;height:1px;background:#4a5a55;"></div>
<div class="t s" style="left:1895px;top:756px;height:12px;line-height:12px;color:#fff;font-size:11px;">0.4</div>
<svg style="position:absolute;left:1891px;top:770px" width="7" height="8" viewBox="0 0 7 8" ><path d="M3.500 0L7 4H4.500v4h-2V4H0z" fill="#3b8bf5"/></svg>
<div class="t s" style="left:1901px;top:767px;height:12px;line-height:12px;color:#ddd;font-size:10px;">K/s</div>
<div class="t s" style="left:1895px;top:783px;height:12px;line-height:12px;color:#fff;font-size:11px;">0.0</div>
<svg style="position:absolute;left:1891px;top:797px" width="7" height="8" viewBox="0 0 7 8" ><path d="M3.500 8L7 4H4.500V0h-2v4H0z" fill="#20c040"/></svg>
<div class="t s" style="left:1901px;top:794px;height:12px;line-height:12px;color:#ddd;font-size:10px;">K/s</div>
<div style="position:absolute;left:1890px;top:814px;width:26px;height:1px;background:#4a5a55;"></div>
<svg style="position:absolute;left:1895px;top:822px" width="16" height="14" viewBox="0 0 16 14" ><path d="M1 3.500h3.500l1-2h5l1 2H15v9.500H1z" fill="none" stroke="#e0e0e0" stroke-width="1.200"/><circle cx="8" cy="8" r="2" fill="#fff"/></svg>
</body></html>
